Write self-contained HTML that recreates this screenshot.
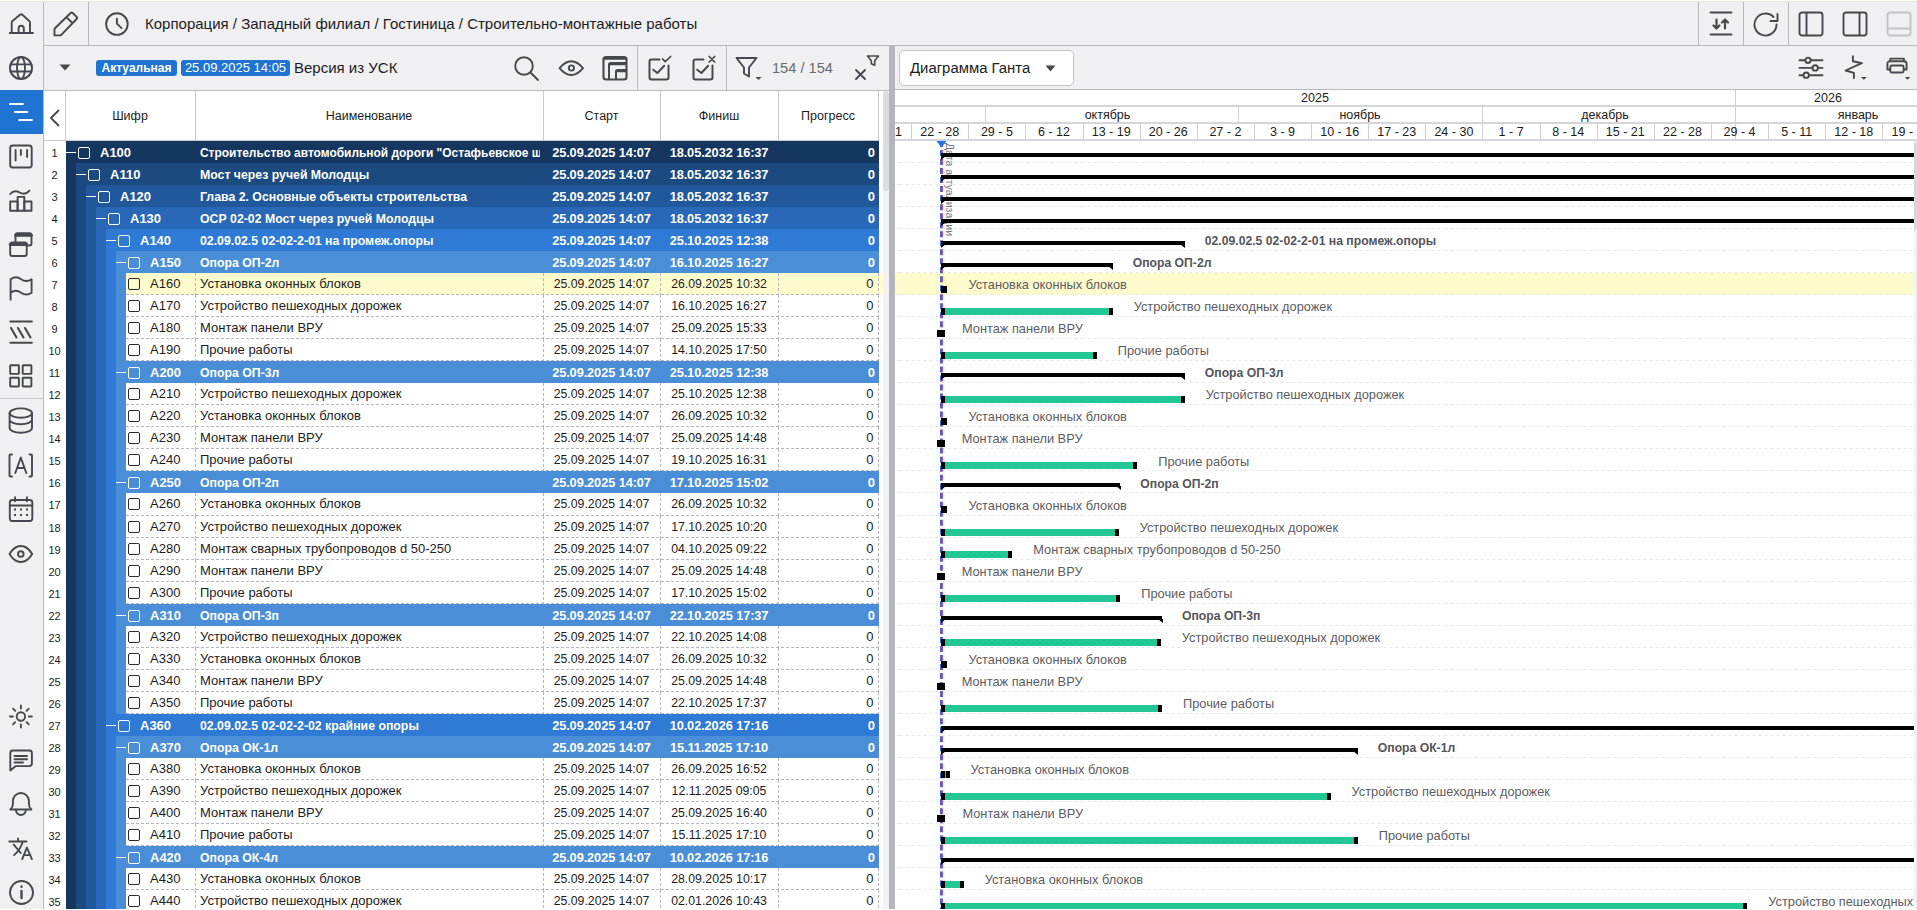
<!DOCTYPE html>
<html><head><meta charset="utf-8"><title>Gantt</title>
<style>
*{box-sizing:border-box;margin:0;padding:0}
html,body{width:1917px;height:910px;overflow:hidden;background:#fff;font-family:"Liberation Sans", sans-serif;color:#1c1c1e}
.a{position:absolute}
.t{position:absolute;white-space:nowrap;line-height:22px;font-size:13px}
.hd{position:absolute;white-space:nowrap;font-size:12.5px;line-height:16px;color:#1c1c1e;text-align:center}
.g{color:#fff;font-weight:bold}
.cb{position:absolute;width:12px;height:12px;border:1.5px solid #2a2a2e;border-radius:2px}
.cbw{border-color:#fff}
.mn{position:absolute;height:1.5px;width:10px;background:#fff}
</style></head><body>

<div class="a" style="left:0;top:0;width:1917px;height:910px;background:#fff"></div>
<div class="a" style="left:0;top:0;width:1917px;height:90px;background:#f0f0f2"></div>
<div class="a" style="left:0;top:0;width:43px;height:909px;background:#f0f0f2"></div>
<div class="a" style="left:0;top:0;width:1917px;height:1px;background:#fff"></div>
<div class="a" style="left:0;top:1px;width:1917px;height:1px;background:#e3e7dc"></div>
<div class="a" style="left:43px;top:2px;width:1px;height:907px;background:#b9b9bf"></div>
<div class="a" style="left:44px;top:45px;width:1873px;height:1px;background:#b9b9bf"></div>
<div class="a" style="left:88px;top:2px;width:1px;height:43px;background:#b9b9bf"></div>
<div class="a" style="left:1698px;top:2px;width:1px;height:43px;background:#b9b9bf"></div>
<div class="a" style="left:1743px;top:2px;width:1px;height:43px;background:#b9b9bf"></div>
<div class="a" style="left:1788px;top:2px;width:1px;height:43px;background:#b9b9bf"></div>
<div class="a" style="left:44px;top:90px;width:845px;height:1px;background:#b9b9bf"></div>
<div class="a" style="left:895px;top:89px;width:1022px;height:1px;background:#b9b9bf"></div>
<div class="a" style="left:637px;top:46px;width:1px;height:44px;background:#b9b9bf"></div>
<div class="a" style="left:726px;top:46px;width:1px;height:44px;background:#b9b9bf"></div>
<div class="a" style="left:145px;top:13px;font-size:15px;line-height:22px;white-space:nowrap;color:#1c1c1e">Корпорация / Западный филиал / Гостиница / Строительно-монтажные работы</div>
<svg style="position:absolute;left:9px;top:12px" width="26" height="24" viewBox="0 0 26 24" fill="none" stroke="#47474f" stroke-width="1.9" stroke-linecap="round" stroke-linejoin="round" ><path d="M0.5 21h23.5"/><path d="M2.7 21V10.6a2 2 0 0 1 .8-1.6L11 2.8a1.8 1.8 0 0 1 2.4 0L20.2 9a2 2 0 0 1 .8 1.6V21"/><path d="M9.6 21v-4.6a2.6 2.6 0 0 1 5.2 0V21"/></svg>
<svg style="position:absolute;left:53px;top:11px" width="26" height="26" viewBox="0 0 26 26" fill="none" stroke="#47474f" stroke-width="1.9" stroke-linecap="round" stroke-linejoin="round" ><path d="M1.5 17.8L17.6 2a1.5 1.5 0 0 1 2.1 0l3.9 3.9a1.5 1.5 0 0 1 0 2.1L7.8 24.4H1.5z"/><path d="M13.8 6.6l5.4 5.2"/></svg>
<svg style="position:absolute;left:104px;top:11px" width="26" height="26" viewBox="0 0 26 26" fill="none" stroke="#47474f" stroke-width="1.9" stroke-linecap="round" stroke-linejoin="round" ><circle cx="12.9" cy="13.1" r="10.8"/><path d="M12.9 7.6v5l4.6 4.6"/></svg>
<svg style="position:absolute;left:1708px;top:11px" width="26" height="26" viewBox="0 0 26 26" fill="none" stroke="#47474f" stroke-width="1.9" stroke-linecap="round" stroke-linejoin="round" ><path d="M2.5 1.5h21M2.5 23.5h21"/><path d="M8.5 8.5v9M5.5 14.5l3 3 3-3" stroke-width="2.2"/><path d="M17 17.5v-9M14 11.5l3-3 3 3" stroke-width="2.2"/></svg>
<svg style="position:absolute;left:1753px;top:11px" width="27" height="27" viewBox="0 0 27 27" fill="none" stroke="#47474f" stroke-width="1.9" stroke-linecap="round" stroke-linejoin="round" ><path d="M23.5 13.5A11 11 0 1 1 20.5 6"/><path d="M24.5 3v7h-7"/></svg>
<svg style="position:absolute;left:1798px;top:11px" width="26" height="26" viewBox="0 0 26 26" fill="none" stroke="#47474f" stroke-width="1.9" stroke-linecap="round" stroke-linejoin="round" ><rect x="1.5" y="1.5" width="23" height="23" rx="2.5"/><path d="M8.5 2v22"/></svg>
<svg style="position:absolute;left:1842px;top:11px" width="26" height="26" viewBox="0 0 26 26" fill="none" stroke="#47474f" stroke-width="1.9" stroke-linecap="round" stroke-linejoin="round" ><rect x="1.5" y="1.5" width="23" height="23" rx="2.5"/><path d="M17.5 2v22"/></svg>
<svg style="position:absolute;left:1886px;top:11px" width="26" height="26" viewBox="0 0 26 26" fill="none" stroke="#c4c4c8" stroke-width="1.9" stroke-linecap="round" stroke-linejoin="round"><rect x="1.5" y="1.5" width="23" height="23" rx="2.5"/><path d="M2 17.5h22"/></svg>
<svg style="position:absolute;left:8px;top:55px" width="26" height="26" viewBox="0 0 26 26" fill="none" stroke="#47474f" stroke-width="1.9" stroke-linecap="round" stroke-linejoin="round" ><circle cx="13" cy="13" r="11"/><path d="M2.5 9.4h21M2.5 16.5h21"/><ellipse cx="13" cy="13" rx="4" ry="11"/></svg>
<div class="a" style="left:0;top:90px;width:43px;height:44px;background:#1f74d2"></div>
<svg style="position:absolute;left:8px;top:100px" width="27" height="24" viewBox="0 0 27 24" fill="none" stroke="#fff" stroke-width="1.9" stroke-linecap="round" stroke-linejoin="round" ><path d="M2 4h13M7 12h12.3M11.2 20H24"/></svg>
<svg style="position:absolute;left:8px;top:143px" width="27" height="26" viewBox="0 0 27 26" fill="none" stroke="#47474f" stroke-width="1.9" stroke-linecap="round" stroke-linejoin="round" ><rect x="2.2" y="2.5" width="21.5" height="22" rx="2.5"/><path d="M7.6 7v10.5M12.9 7v5M19.1 7v7"/></svg>
<svg style="position:absolute;left:8px;top:187px" width="27" height="27" viewBox="0 0 27 27" fill="none" stroke="#47474f" stroke-width="1.9" stroke-linecap="round" stroke-linejoin="round" ><path d="M2.2 7c3-3.5 6-3.5 9.5-1.5s6.5 2 9.8-1.8"/><rect x="2.2" y="14.5" width="7.4" height="9.3"/><rect x="9.6" y="9.9" width="6.7" height="13.9"/><rect x="16.3" y="14.5" width="7.2" height="9.3"/></svg>
<svg style="position:absolute;left:8px;top:231px" width="27" height="27" viewBox="0 0 27 27" fill="none" stroke="#47474f" stroke-width="1.9" stroke-linecap="round" stroke-linejoin="round" ><rect x="7.5" y="2.3" width="16" height="12.2" rx="2"/><path d="M7.5 4.2h16" stroke-width="3"/><rect x="2.2" y="11.5" width="16.5" height="13.5" rx="2" fill="#f0f0f2"/><path d="M2.2 13.4h16.5" stroke-width="3"/></svg>
<svg style="position:absolute;left:8px;top:275px" width="27" height="27" viewBox="0 0 27 27" fill="none" stroke="#47474f" stroke-width="1.9" stroke-linecap="round" stroke-linejoin="round" ><path d="M2.6 24.7V4.2c3.5-2.5 7-2.5 10.5 0s7 2.5 10.5 0v13.5c-3.5 2.5-7 2.5-10.5 0s-7-2.5-10.5 0"/></svg>
<svg style="position:absolute;left:8px;top:319px" width="27" height="27" viewBox="0 0 27 27" fill="none" stroke="#47474f" stroke-width="1.9" stroke-linecap="round" stroke-linejoin="round" ><path d="M2.3 2.5h21.6M2.3 23.8h21.6"/><path d="M3 9l5.5 9.5M10 9l5.5 9.5M17 9l5.5 9.5" stroke-width="2.1"/></svg>
<svg style="position:absolute;left:8px;top:363px" width="27" height="27" viewBox="0 0 27 27" fill="none" stroke="#47474f" stroke-width="1.9" stroke-linecap="round" stroke-linejoin="round" ><rect x="2.2" y="2.2" width="8.7" height="8.7" rx="0.5"/><rect x="14.7" y="2.2" width="8.7" height="8.7" rx="0.5"/><rect x="2.2" y="14.8" width="8.7" height="8.7" rx="0.5"/><rect x="14.7" y="14.8" width="8.7" height="8.7" rx="0.5"/></svg>
<div class="a" style="left:0;top:398px;width:43px;height:1px;background:#c8c8cc"></div>
<svg style="position:absolute;left:8px;top:407px" width="27" height="27" viewBox="0 0 27 27" fill="none" stroke="#47474f" stroke-width="1.9" stroke-linecap="round" stroke-linejoin="round" ><ellipse cx="12.8" cy="6.1" rx="11.2" ry="4.7"/><path d="M1.6 6.1v15M24 6.1v15M1.6 12.6a11.2 4.7 0 0 0 22.4 0M1.6 21a11.2 4.7 0 0 0 22.4 0"/></svg>
<svg style="position:absolute;left:8px;top:452px" width="27" height="27" viewBox="0 0 27 27" fill="none" stroke="#47474f" stroke-width="1.9" stroke-linecap="round" stroke-linejoin="round" ><path d="M4 2.5H2.5a1 1 0 0 0-1 1v20a1 1 0 0 0 1 1H4M21.5 2.5H23a1 1 0 0 1 1 1v20a1 1 0 0 1-1 1h-1.5"/><path d="M7.3 21l5.5-15.5L18.3 21M9.2 16h7.2"/></svg>
<svg style="position:absolute;left:8px;top:496px" width="27" height="27" viewBox="0 0 27 27" fill="none" stroke="#47474f" stroke-width="1.9" stroke-linecap="round" stroke-linejoin="round" ><rect x="1.8" y="4" width="22.5" height="21" rx="2.5"/><path d="M1.8 9.5h22.5M7 1.3v4M19 1.3v4"/><path d="M6 13.5h2M12 13.5h2M18 13.5h2M6 19h2M12 19h2M18 19h2" stroke-width="1.8" stroke-linecap="butt"/></svg>
<svg style="position:absolute;left:8px;top:541px" width="27" height="27" viewBox="0 0 27 27" fill="none" stroke="#47474f" stroke-width="1.9" stroke-linecap="round" stroke-linejoin="round" ><path d="M1.5 13C4.5 8 8.5 5 12.8 5S21.2 8 24.2 13C21.2 18 17.2 21 12.8 21S4.5 18 1.5 13z"/><circle cx="12.8" cy="13" r="2.8"/></svg>
<svg style="position:absolute;left:8px;top:703px" width="27" height="27" viewBox="0 0 27 27" fill="none" stroke="#47474f" stroke-width="1.9" stroke-linecap="round" stroke-linejoin="round" ><circle cx="12.9" cy="13.5" r="4.2"/><path d="M12.9 2.5v3M12.9 21.5v3M1.9 13.5h3M20.9 13.5h3M5.1 5.7l2.1 2.1M18.6 19.2l2.1 2.1M5.1 21.3l2.1-2.1M18.6 7.8l2.1-2.1"/></svg>
<svg style="position:absolute;left:8px;top:747px" width="27" height="27" viewBox="0 0 27 27" fill="none" stroke="#47474f" stroke-width="1.9" stroke-linecap="round" stroke-linejoin="round" ><path d="M2.3 23.5V6a2.5 2.5 0 0 1 2.5-2.5h16.6a2.5 2.5 0 0 1 2.5 2.5v10.6a2.5 2.5 0 0 1-2.5 2.5H7.8z"/><path d="M6.5 9h12.5M6.5 12.2h12.5M6.5 15.5h8.5"/></svg>
<svg style="position:absolute;left:8px;top:791px" width="27" height="27" viewBox="0 0 27 27" fill="none" stroke="#47474f" stroke-width="1.9" stroke-linecap="round" stroke-linejoin="round" ><path d="M2.3 18.5c1.8-1.5 2.6-3 2.6-5.5V10a8 8 0 0 1 16 0v3c0 2.5.8 4 2.6 5.5z"/><path d="M7.9 18.8a5 5.2 0 0 0 10 0"/></svg>
<svg style="position:absolute;left:8px;top:835px" width="27" height="27" viewBox="0 0 27 27" fill="none" stroke="#47474f" stroke-width="1.9" stroke-linecap="round" stroke-linejoin="round" ><path d="M1.3 6.5h17.2M10 3.5v3"/><path d="M14.4 7.7c-1.5 5-4.5 9-8.3 12.4M5.7 9.6l7.1 8.4"/><path d="M14.2 24.1l4.7-11.5 5 11.5M16 20.1h6"/></svg>
<svg style="position:absolute;left:8px;top:879px" width="27" height="27" viewBox="0 0 27 27" fill="none" stroke="#47474f" stroke-width="1.9" stroke-linecap="round" stroke-linejoin="round" ><circle cx="13.5" cy="13.5" r="11.5"/><path d="M13.5 12v7M13.5 7.5v.3" stroke-width="2.4"/></svg>
<svg class="a" style="left:59px;top:64px" width="12" height="7"><path d="M0.5 0.5h11l-5.5 6z" fill="#47474f"/></svg>
<div class="a" style="left:96px;top:60px;width:81px;height:16px;background:#1f74d2;border-radius:3px;color:#fff;font-size:12px;line-height:16px;text-align:center;font-weight:bold">Актуальная</div>
<div class="a" style="left:181px;top:60px;width:109px;height:16px;background:#1f74d2;border-radius:3px;color:#fff;font-size:13px;line-height:16px;text-align:center">25.09.2025 14:05</div>
<div class="a" style="left:294px;top:57px;font-size:15px;line-height:22px;white-space:nowrap;color:#1c1c1e">Версия из УСК</div>
<svg style="position:absolute;left:513px;top:55px" width="28" height="27" viewBox="0 0 28 27" fill="none" stroke="#47474f" stroke-width="1.9" stroke-linecap="round" stroke-linejoin="round" ><circle cx="11" cy="11" r="8.8"/><path d="M17.5 17.5L25 25"/></svg>
<svg style="position:absolute;left:557px;top:55px" width="28" height="27" viewBox="0 0 28 27" fill="none" stroke="#47474f" stroke-width="1.9" stroke-linecap="round" stroke-linejoin="round" ><path d="M2.6 13.1C5.8 9.2 9.6 6.2 14.3 6.2S22.8 9.2 26 13.1C22.8 17 19 20 14.3 20S5.8 17 2.6 13.1z"/><circle cx="14.4" cy="13" r="2.6"/></svg>
<svg style="position:absolute;left:601px;top:54px" width="28" height="28" viewBox="0 0 28 28" fill="none" stroke="#47474f" stroke-width="1.9" stroke-linecap="round" stroke-linejoin="round" ><rect x="2.5" y="3" width="23" height="22.5" rx="2.5" stroke-width="2.1"/><path d="M3 4.6h22" stroke-width="2.4"/><path d="M8 25V10.5a1.5 1.5 0 0 1 1.5-1.5H25M8.5 10.2H25" stroke-width="2"/><path d="M15 25V17.5a1.5 1.5 0 0 1 1.5-1.5H25M15.5 17.2H25" stroke-width="2"/></svg>
<svg style="position:absolute;left:646px;top:54px" width="28" height="28" viewBox="0 0 28 28" fill="none" stroke="#47474f" stroke-width="1.9" stroke-linecap="round" stroke-linejoin="round" ><path d="M13.5 5.5H5.5a2 2 0 0 0-2 2v16a2 2 0 0 0 2 2h15a2 2 0 0 0 2-2V11.5" stroke-width="2"/><path d="M7.2 15.7l4.2 3.3 6.8-7.2" stroke-width="2"/><path d="M16.6 5l2.6 2.6 5.5-5.1" stroke-width="1.7"/></svg>
<svg style="position:absolute;left:690px;top:54px" width="28" height="28" viewBox="0 0 28 28" fill="none" stroke="#47474f" stroke-width="1.9" stroke-linecap="round" stroke-linejoin="round" ><path d="M13.5 5.5H5.5a2 2 0 0 0-2 2v16a2 2 0 0 0 2 2h15a2 2 0 0 0 2-2V11.5" stroke-width="2"/><path d="M7.2 15.7l4.2 3.3 6.8-7.2" stroke-width="2"/><path d="M19.2 2.5l5.5 5.5M24.7 2.5l-5.5 5.5" stroke-width="1.7"/></svg>
<svg style="position:absolute;left:734px;top:54px" width="30" height="28" viewBox="0 0 30 28" fill="none" stroke="#47474f" stroke-width="1.9" stroke-linecap="round" stroke-linejoin="round" ><path d="M2.5 4h20l-7.5 9.5v9l-5-3v-6z"/><path d="M21.5 23h6l-3 3z" fill="#47474f" stroke="none"/></svg>
<div class="a" style="left:772px;top:57px;font-size:14.6px;line-height:22px;white-space:nowrap;color:#6a6a70">154 / 154</div>
<svg style="position:absolute;left:852px;top:53px" width="28" height="30" viewBox="0 0 28 30" fill="none" stroke="#47474f" stroke-width="1.9" stroke-linecap="round" stroke-linejoin="round" ><path d="M4 17l9 9M13 17l-9 9"/><path d="M15.5 3h11l-3.8 4.8v4.5l-3.4-1.6V7.8z" stroke-width="1.6"/></svg>
<div class="a" style="left:899px;top:50px;width:175px;height:36px;background:#fff;border:1px solid #c2c2c8;border-radius:5px"></div>
<div class="a" style="left:910px;top:57px;font-size:14.9px;line-height:22px;white-space:nowrap;color:#1c1c1e">Диаграмма Ганта</div>
<svg class="a" style="left:1045px;top:65px" width="11" height="7"><path d="M0.5 0.5h10l-5 6z" fill="#47474f"/></svg>
<svg style="position:absolute;left:1797px;top:56px" width="28" height="26" viewBox="0 0 28 26" fill="none" stroke="#47474f" stroke-width="1.9" stroke-linecap="round" stroke-linejoin="round" ><path d="M2.5 4.3h23M2.5 11.9h23M2.5 19.2h23"/><circle cx="11" cy="4.3" r="2.7" fill="#f0f0f2"/><circle cx="18.2" cy="11.9" r="2.7" fill="#f0f0f2"/><circle cx="9.2" cy="19.2" r="2.7" fill="#f0f0f2"/></svg>
<svg style="position:absolute;left:1843px;top:54px" width="30" height="28" viewBox="0 0 30 28" fill="none" stroke="#47474f" stroke-width="1.9" stroke-linecap="round" stroke-linejoin="round" ><path d="M9.9 2.3v4.9l9 2L2.6 16.5l8.3 2.3v5.3"/><path d="M17.9 23.1h5.9l-2.95 2.7z" fill="#47474f" stroke="none"/></svg>
<svg style="position:absolute;left:1885px;top:55px" width="32" height="28" viewBox="0 0 32 28" fill="none" stroke="#47474f" stroke-width="1.9" stroke-linecap="round" stroke-linejoin="round" ><path d="M5.3 5.8V3.6h13.6v2.2"/><path d="M2.4 14.5V8.7a2.5 2.5 0 0 1 2.5-2.5h14.2a2.5 2.5 0 0 1 2.5 2.5v5.8z"/><rect x="5.3" y="10.5" width="13.3" height="7" rx="1.5" fill="#f0f0f2"/><path d="M19.9 22.1h5.3l-2.65 2.7z" fill="#47474f" stroke="none"/></svg>
<div class="a" style="left:44px;top:91px;width:835px;height:49px;background:#fff"></div>
<div class="a" style="left:44px;top:140px;width:835px;height:1px;background:#c9c9ce"></div>
<div class="a" style="left:65px;top:91px;width:1px;height:49px;background:#c9c9ce"></div>
<div class="a" style="left:195px;top:91px;width:1px;height:49px;background:#c9c9ce"></div>
<div class="a" style="left:543px;top:91px;width:1px;height:49px;background:#c9c9ce"></div>
<div class="a" style="left:660px;top:91px;width:1px;height:49px;background:#c9c9ce"></div>
<div class="a" style="left:778px;top:91px;width:1px;height:49px;background:#c9c9ce"></div>
<div class="a" style="left:878px;top:91px;width:1px;height:49px;background:#c9c9ce"></div>
<svg style="position:absolute;left:48px;top:108px" width="14" height="20" viewBox="0 0 14 20" fill="none" stroke="#47474f" stroke-width="1.9" stroke-linecap="round" stroke-linejoin="round" ><path d="M10.5 2.5L3 10l7.5 7.5" stroke-width="1.8"/></svg>
<div class="hd" style="left:65px;top:108px;width:130px">Шифр</div>
<div class="hd" style="left:195px;top:108px;width:348px">Наименование</div>
<div class="hd" style="left:543px;top:108px;width:117px">Старт</div>
<div class="hd" style="left:660px;top:108px;width:118px">Финиш</div>
<div class="hd" style="left:778px;top:108px;width:100px">Прогресс</div>
<div class="t" style="left:44px;top:142px;width:21px;text-align:center;font-size:11px">1</div>
<div class="a" style="left:66px;top:141px;width:813px;height:22px;background:#15365f"></div>
<div class="mn" style="left:66px;top:151.5px"></div>
<div class="cb cbw" style="left:78px;top:147px"></div>
<div class="t g" style="left:100px;top:142px">A100</div>
<div class="t g" style="left:200px;top:142px;width:340px;overflow:hidden;font-size:11.95px">Строительство автомобильной дороги "Остафьевское шоссе"</div>
<div class="t g" style="left:543px;top:142px;width:117px;text-align:center;font-size:12.8px;letter-spacing:-0.1px">25.09.2025 14:07</div>
<div class="t g" style="left:660px;top:142px;width:118px;text-align:center;font-size:12.8px;letter-spacing:-0.1px">18.05.2032 16:37</div>
<div class="t g" style="left:778px;top:142px;width:97px;text-align:right">0</div>
<div class="t" style="left:44px;top:164px;width:21px;text-align:center;font-size:11px">2</div>
<div class="a" style="left:66px;top:163px;width:10px;height:22px;background:#15365f"></div>
<div class="a" style="left:76px;top:163px;width:803px;height:22px;background:#1b4a80"></div>
<div class="mn" style="left:76px;top:173.5px"></div>
<div class="cb cbw" style="left:88px;top:169px"></div>
<div class="t g" style="left:110px;top:164px">A110</div>
<div class="t g" style="left:200px;top:164px;width:340px;overflow:hidden;font-size:12.3px">Мост через ручей Молодцы</div>
<div class="t g" style="left:543px;top:164px;width:117px;text-align:center;font-size:12.8px;letter-spacing:-0.1px">25.09.2025 14:07</div>
<div class="t g" style="left:660px;top:164px;width:118px;text-align:center;font-size:12.8px;letter-spacing:-0.1px">18.05.2032 16:37</div>
<div class="t g" style="left:778px;top:164px;width:97px;text-align:right">0</div>
<div class="t" style="left:44px;top:186px;width:21px;text-align:center;font-size:11px">3</div>
<div class="a" style="left:66px;top:185px;width:10px;height:22px;background:#15365f"></div>
<div class="a" style="left:76px;top:185px;width:10px;height:22px;background:#1b4a80"></div>
<div class="a" style="left:86px;top:185px;width:793px;height:22px;background:#21589b"></div>
<div class="mn" style="left:86px;top:195.5px"></div>
<div class="cb cbw" style="left:98px;top:191px"></div>
<div class="t g" style="left:120px;top:186px">A120</div>
<div class="t g" style="left:200px;top:186px;width:340px;overflow:hidden;font-size:12.3px">Глава 2. Основные объекты строительства</div>
<div class="t g" style="left:543px;top:186px;width:117px;text-align:center;font-size:12.8px;letter-spacing:-0.1px">25.09.2025 14:07</div>
<div class="t g" style="left:660px;top:186px;width:118px;text-align:center;font-size:12.8px;letter-spacing:-0.1px">18.05.2032 16:37</div>
<div class="t g" style="left:778px;top:186px;width:97px;text-align:right">0</div>
<div class="t" style="left:44px;top:208px;width:21px;text-align:center;font-size:11px">4</div>
<div class="a" style="left:66px;top:207px;width:10px;height:22px;background:#15365f"></div>
<div class="a" style="left:76px;top:207px;width:10px;height:22px;background:#1b4a80"></div>
<div class="a" style="left:86px;top:207px;width:10px;height:22px;background:#21589b"></div>
<div class="a" style="left:96px;top:207px;width:783px;height:22px;background:#2868b6"></div>
<div class="mn" style="left:96px;top:217.5px"></div>
<div class="cb cbw" style="left:108px;top:213px"></div>
<div class="t g" style="left:130px;top:208px">A130</div>
<div class="t g" style="left:200px;top:208px;width:340px;overflow:hidden;font-size:12.3px">ОСР 02-02 Мост через ручей Молодцы</div>
<div class="t g" style="left:543px;top:208px;width:117px;text-align:center;font-size:12.8px;letter-spacing:-0.1px">25.09.2025 14:07</div>
<div class="t g" style="left:660px;top:208px;width:118px;text-align:center;font-size:12.8px;letter-spacing:-0.1px">18.05.2032 16:37</div>
<div class="t g" style="left:778px;top:208px;width:97px;text-align:right">0</div>
<div class="t" style="left:44px;top:230px;width:21px;text-align:center;font-size:11px">5</div>
<div class="a" style="left:66px;top:229px;width:10px;height:22px;background:#15365f"></div>
<div class="a" style="left:76px;top:229px;width:10px;height:22px;background:#1b4a80"></div>
<div class="a" style="left:86px;top:229px;width:10px;height:22px;background:#21589b"></div>
<div class="a" style="left:96px;top:229px;width:10px;height:22px;background:#2868b6"></div>
<div class="a" style="left:106px;top:229px;width:773px;height:22px;background:#2e7ad4"></div>
<div class="mn" style="left:106px;top:239.5px"></div>
<div class="cb cbw" style="left:118px;top:235px"></div>
<div class="t g" style="left:140px;top:230px">A140</div>
<div class="t g" style="left:200px;top:230px;width:340px;overflow:hidden;font-size:12.3px">02.09.02.5 02-02-2-01 на промеж.опоры</div>
<div class="t g" style="left:543px;top:230px;width:117px;text-align:center;font-size:12.8px;letter-spacing:-0.1px">25.09.2025 14:07</div>
<div class="t g" style="left:660px;top:230px;width:118px;text-align:center;font-size:12.8px;letter-spacing:-0.1px">25.10.2025 12:38</div>
<div class="t g" style="left:778px;top:230px;width:97px;text-align:right">0</div>
<div class="t" style="left:44px;top:252px;width:21px;text-align:center;font-size:11px">6</div>
<div class="a" style="left:66px;top:251px;width:10px;height:22px;background:#15365f"></div>
<div class="a" style="left:76px;top:251px;width:10px;height:22px;background:#1b4a80"></div>
<div class="a" style="left:86px;top:251px;width:10px;height:22px;background:#21589b"></div>
<div class="a" style="left:96px;top:251px;width:10px;height:22px;background:#2868b6"></div>
<div class="a" style="left:106px;top:251px;width:10px;height:22px;background:#2e7ad4"></div>
<div class="a" style="left:116px;top:251px;width:763px;height:22px;background:#4a8ed8"></div>
<div class="mn" style="left:116px;top:261.5px"></div>
<div class="cb cbw" style="left:128px;top:257px"></div>
<div class="t g" style="left:150px;top:252px">A150</div>
<div class="t g" style="left:200px;top:252px;width:340px;overflow:hidden;font-size:12.3px">Опора ОП-2л</div>
<div class="t g" style="left:543px;top:252px;width:117px;text-align:center;font-size:12.8px;letter-spacing:-0.1px">25.09.2025 14:07</div>
<div class="t g" style="left:660px;top:252px;width:118px;text-align:center;font-size:12.8px;letter-spacing:-0.1px">16.10.2025 16:27</div>
<div class="t g" style="left:778px;top:252px;width:97px;text-align:right">0</div>
<div class="t" style="left:44px;top:274px;width:21px;text-align:center;font-size:11px">7</div>
<div class="a" style="left:66px;top:273px;width:10px;height:22px;background:#15365f"></div>
<div class="a" style="left:76px;top:273px;width:10px;height:22px;background:#1b4a80"></div>
<div class="a" style="left:86px;top:273px;width:10px;height:22px;background:#21589b"></div>
<div class="a" style="left:96px;top:273px;width:10px;height:22px;background:#2868b6"></div>
<div class="a" style="left:106px;top:273px;width:10px;height:22px;background:#2e7ad4"></div>
<div class="a" style="left:116px;top:273px;width:10px;height:22px;background:#4a8ed8"></div>
<div class="a" style="left:126px;top:273px;width:753px;height:22px;background:#fefbcc"></div>
<div class="a" style="left:126px;top:294px;width:752px;height:1px;background:repeating-linear-gradient(90deg,#b6b6be 0 3px,transparent 3px 5px)"></div>
<div class="a" style="left:195px;top:273px;width:1px;height:22px;background:repeating-linear-gradient(180deg,#b6b6be 0 3px,transparent 3px 5px)"></div>
<div class="a" style="left:543px;top:273px;width:1px;height:22px;background:repeating-linear-gradient(180deg,#b6b6be 0 3px,transparent 3px 5px)"></div>
<div class="a" style="left:660px;top:273px;width:1px;height:22px;background:repeating-linear-gradient(180deg,#b6b6be 0 3px,transparent 3px 5px)"></div>
<div class="a" style="left:778px;top:273px;width:1px;height:22px;background:repeating-linear-gradient(180deg,#b6b6be 0 3px,transparent 3px 5px)"></div>
<div class="a" style="left:878px;top:273px;width:1px;height:22px;background:repeating-linear-gradient(180deg,#b6b6be 0 3px,transparent 3px 5px)"></div>
<div class="cb" style="left:128px;top:278px"></div>
<div class="t" style="left:150px;top:273px">A160</div>
<div class="t" style="left:200px;top:273px">Установка оконных блоков</div>
<div class="t" style="left:543px;top:273px;width:117px;text-align:center;font-size:12.3px">25.09.2025 14:07</div>
<div class="t" style="left:660px;top:273px;width:118px;text-align:center;font-size:12.3px">26.09.2025 10:32</div>
<div class="t" style="left:778px;top:273px;width:95.5px;text-align:right">0</div>
<div class="t" style="left:44px;top:296px;width:21px;text-align:center;font-size:11px">8</div>
<div class="a" style="left:66px;top:295px;width:10px;height:22px;background:#15365f"></div>
<div class="a" style="left:76px;top:295px;width:10px;height:22px;background:#1b4a80"></div>
<div class="a" style="left:86px;top:295px;width:10px;height:22px;background:#21589b"></div>
<div class="a" style="left:96px;top:295px;width:10px;height:22px;background:#2868b6"></div>
<div class="a" style="left:106px;top:295px;width:10px;height:22px;background:#2e7ad4"></div>
<div class="a" style="left:116px;top:295px;width:10px;height:22px;background:#4a8ed8"></div>
<div class="a" style="left:126px;top:295px;width:753px;height:22px;background:#fff"></div>
<div class="a" style="left:126px;top:316px;width:752px;height:1px;background:repeating-linear-gradient(90deg,#b6b6be 0 3px,transparent 3px 5px)"></div>
<div class="a" style="left:195px;top:295px;width:1px;height:22px;background:repeating-linear-gradient(180deg,#b6b6be 0 3px,transparent 3px 5px)"></div>
<div class="a" style="left:543px;top:295px;width:1px;height:22px;background:repeating-linear-gradient(180deg,#b6b6be 0 3px,transparent 3px 5px)"></div>
<div class="a" style="left:660px;top:295px;width:1px;height:22px;background:repeating-linear-gradient(180deg,#b6b6be 0 3px,transparent 3px 5px)"></div>
<div class="a" style="left:778px;top:295px;width:1px;height:22px;background:repeating-linear-gradient(180deg,#b6b6be 0 3px,transparent 3px 5px)"></div>
<div class="a" style="left:878px;top:295px;width:1px;height:22px;background:repeating-linear-gradient(180deg,#b6b6be 0 3px,transparent 3px 5px)"></div>
<div class="cb" style="left:128px;top:300px"></div>
<div class="t" style="left:150px;top:295px">A170</div>
<div class="t" style="left:200px;top:295px">Устройство пешеходных дорожек</div>
<div class="t" style="left:543px;top:295px;width:117px;text-align:center;font-size:12.3px">25.09.2025 14:07</div>
<div class="t" style="left:660px;top:295px;width:118px;text-align:center;font-size:12.3px">16.10.2025 16:27</div>
<div class="t" style="left:778px;top:295px;width:95.5px;text-align:right">0</div>
<div class="t" style="left:44px;top:318px;width:21px;text-align:center;font-size:11px">9</div>
<div class="a" style="left:66px;top:317px;width:10px;height:22px;background:#15365f"></div>
<div class="a" style="left:76px;top:317px;width:10px;height:22px;background:#1b4a80"></div>
<div class="a" style="left:86px;top:317px;width:10px;height:22px;background:#21589b"></div>
<div class="a" style="left:96px;top:317px;width:10px;height:22px;background:#2868b6"></div>
<div class="a" style="left:106px;top:317px;width:10px;height:22px;background:#2e7ad4"></div>
<div class="a" style="left:116px;top:317px;width:10px;height:22px;background:#4a8ed8"></div>
<div class="a" style="left:126px;top:317px;width:753px;height:22px;background:#fff"></div>
<div class="a" style="left:126px;top:338px;width:752px;height:1px;background:repeating-linear-gradient(90deg,#b6b6be 0 3px,transparent 3px 5px)"></div>
<div class="a" style="left:195px;top:317px;width:1px;height:22px;background:repeating-linear-gradient(180deg,#b6b6be 0 3px,transparent 3px 5px)"></div>
<div class="a" style="left:543px;top:317px;width:1px;height:22px;background:repeating-linear-gradient(180deg,#b6b6be 0 3px,transparent 3px 5px)"></div>
<div class="a" style="left:660px;top:317px;width:1px;height:22px;background:repeating-linear-gradient(180deg,#b6b6be 0 3px,transparent 3px 5px)"></div>
<div class="a" style="left:778px;top:317px;width:1px;height:22px;background:repeating-linear-gradient(180deg,#b6b6be 0 3px,transparent 3px 5px)"></div>
<div class="a" style="left:878px;top:317px;width:1px;height:22px;background:repeating-linear-gradient(180deg,#b6b6be 0 3px,transparent 3px 5px)"></div>
<div class="cb" style="left:128px;top:322px"></div>
<div class="t" style="left:150px;top:317px">A180</div>
<div class="t" style="left:200px;top:317px">Монтаж панели ВРУ</div>
<div class="t" style="left:543px;top:317px;width:117px;text-align:center;font-size:12.3px">25.09.2025 14:07</div>
<div class="t" style="left:660px;top:317px;width:118px;text-align:center;font-size:12.3px">25.09.2025 15:33</div>
<div class="t" style="left:778px;top:317px;width:95.5px;text-align:right">0</div>
<div class="t" style="left:44px;top:340px;width:21px;text-align:center;font-size:11px">10</div>
<div class="a" style="left:66px;top:339px;width:10px;height:22px;background:#15365f"></div>
<div class="a" style="left:76px;top:339px;width:10px;height:22px;background:#1b4a80"></div>
<div class="a" style="left:86px;top:339px;width:10px;height:22px;background:#21589b"></div>
<div class="a" style="left:96px;top:339px;width:10px;height:22px;background:#2868b6"></div>
<div class="a" style="left:106px;top:339px;width:10px;height:22px;background:#2e7ad4"></div>
<div class="a" style="left:116px;top:339px;width:10px;height:22px;background:#4a8ed8"></div>
<div class="a" style="left:126px;top:339px;width:753px;height:22px;background:#fff"></div>
<div class="a" style="left:126px;top:360px;width:752px;height:1px;background:repeating-linear-gradient(90deg,#b6b6be 0 3px,transparent 3px 5px)"></div>
<div class="a" style="left:195px;top:339px;width:1px;height:22px;background:repeating-linear-gradient(180deg,#b6b6be 0 3px,transparent 3px 5px)"></div>
<div class="a" style="left:543px;top:339px;width:1px;height:22px;background:repeating-linear-gradient(180deg,#b6b6be 0 3px,transparent 3px 5px)"></div>
<div class="a" style="left:660px;top:339px;width:1px;height:22px;background:repeating-linear-gradient(180deg,#b6b6be 0 3px,transparent 3px 5px)"></div>
<div class="a" style="left:778px;top:339px;width:1px;height:22px;background:repeating-linear-gradient(180deg,#b6b6be 0 3px,transparent 3px 5px)"></div>
<div class="a" style="left:878px;top:339px;width:1px;height:22px;background:repeating-linear-gradient(180deg,#b6b6be 0 3px,transparent 3px 5px)"></div>
<div class="cb" style="left:128px;top:344px"></div>
<div class="t" style="left:150px;top:339px">A190</div>
<div class="t" style="left:200px;top:339px">Прочие работы</div>
<div class="t" style="left:543px;top:339px;width:117px;text-align:center;font-size:12.3px">25.09.2025 14:07</div>
<div class="t" style="left:660px;top:339px;width:118px;text-align:center;font-size:12.3px">14.10.2025 17:50</div>
<div class="t" style="left:778px;top:339px;width:95.5px;text-align:right">0</div>
<div class="t" style="left:44px;top:362px;width:21px;text-align:center;font-size:11px">11</div>
<div class="a" style="left:66px;top:361px;width:10px;height:22px;background:#15365f"></div>
<div class="a" style="left:76px;top:361px;width:10px;height:22px;background:#1b4a80"></div>
<div class="a" style="left:86px;top:361px;width:10px;height:22px;background:#21589b"></div>
<div class="a" style="left:96px;top:361px;width:10px;height:22px;background:#2868b6"></div>
<div class="a" style="left:106px;top:361px;width:10px;height:22px;background:#2e7ad4"></div>
<div class="a" style="left:116px;top:361px;width:763px;height:22px;background:#4a8ed8"></div>
<div class="mn" style="left:116px;top:371.5px"></div>
<div class="cb cbw" style="left:128px;top:367px"></div>
<div class="t g" style="left:150px;top:362px">A200</div>
<div class="t g" style="left:200px;top:362px;width:340px;overflow:hidden;font-size:12.3px">Опора ОП-3л</div>
<div class="t g" style="left:543px;top:362px;width:117px;text-align:center;font-size:12.8px;letter-spacing:-0.1px">25.09.2025 14:07</div>
<div class="t g" style="left:660px;top:362px;width:118px;text-align:center;font-size:12.8px;letter-spacing:-0.1px">25.10.2025 12:38</div>
<div class="t g" style="left:778px;top:362px;width:97px;text-align:right">0</div>
<div class="t" style="left:44px;top:384px;width:21px;text-align:center;font-size:11px">12</div>
<div class="a" style="left:66px;top:383px;width:10px;height:22px;background:#15365f"></div>
<div class="a" style="left:76px;top:383px;width:10px;height:22px;background:#1b4a80"></div>
<div class="a" style="left:86px;top:383px;width:10px;height:22px;background:#21589b"></div>
<div class="a" style="left:96px;top:383px;width:10px;height:22px;background:#2868b6"></div>
<div class="a" style="left:106px;top:383px;width:10px;height:22px;background:#2e7ad4"></div>
<div class="a" style="left:116px;top:383px;width:10px;height:22px;background:#4a8ed8"></div>
<div class="a" style="left:126px;top:383px;width:753px;height:22px;background:#fff"></div>
<div class="a" style="left:126px;top:404px;width:752px;height:1px;background:repeating-linear-gradient(90deg,#b6b6be 0 3px,transparent 3px 5px)"></div>
<div class="a" style="left:195px;top:383px;width:1px;height:22px;background:repeating-linear-gradient(180deg,#b6b6be 0 3px,transparent 3px 5px)"></div>
<div class="a" style="left:543px;top:383px;width:1px;height:22px;background:repeating-linear-gradient(180deg,#b6b6be 0 3px,transparent 3px 5px)"></div>
<div class="a" style="left:660px;top:383px;width:1px;height:22px;background:repeating-linear-gradient(180deg,#b6b6be 0 3px,transparent 3px 5px)"></div>
<div class="a" style="left:778px;top:383px;width:1px;height:22px;background:repeating-linear-gradient(180deg,#b6b6be 0 3px,transparent 3px 5px)"></div>
<div class="a" style="left:878px;top:383px;width:1px;height:22px;background:repeating-linear-gradient(180deg,#b6b6be 0 3px,transparent 3px 5px)"></div>
<div class="cb" style="left:128px;top:388px"></div>
<div class="t" style="left:150px;top:383px">A210</div>
<div class="t" style="left:200px;top:383px">Устройство пешеходных дорожек</div>
<div class="t" style="left:543px;top:383px;width:117px;text-align:center;font-size:12.3px">25.09.2025 14:07</div>
<div class="t" style="left:660px;top:383px;width:118px;text-align:center;font-size:12.3px">25.10.2025 12:38</div>
<div class="t" style="left:778px;top:383px;width:95.5px;text-align:right">0</div>
<div class="t" style="left:44px;top:406px;width:21px;text-align:center;font-size:11px">13</div>
<div class="a" style="left:66px;top:405px;width:10px;height:22px;background:#15365f"></div>
<div class="a" style="left:76px;top:405px;width:10px;height:22px;background:#1b4a80"></div>
<div class="a" style="left:86px;top:405px;width:10px;height:22px;background:#21589b"></div>
<div class="a" style="left:96px;top:405px;width:10px;height:22px;background:#2868b6"></div>
<div class="a" style="left:106px;top:405px;width:10px;height:22px;background:#2e7ad4"></div>
<div class="a" style="left:116px;top:405px;width:10px;height:22px;background:#4a8ed8"></div>
<div class="a" style="left:126px;top:405px;width:753px;height:22px;background:#fff"></div>
<div class="a" style="left:126px;top:426px;width:752px;height:1px;background:repeating-linear-gradient(90deg,#b6b6be 0 3px,transparent 3px 5px)"></div>
<div class="a" style="left:195px;top:405px;width:1px;height:22px;background:repeating-linear-gradient(180deg,#b6b6be 0 3px,transparent 3px 5px)"></div>
<div class="a" style="left:543px;top:405px;width:1px;height:22px;background:repeating-linear-gradient(180deg,#b6b6be 0 3px,transparent 3px 5px)"></div>
<div class="a" style="left:660px;top:405px;width:1px;height:22px;background:repeating-linear-gradient(180deg,#b6b6be 0 3px,transparent 3px 5px)"></div>
<div class="a" style="left:778px;top:405px;width:1px;height:22px;background:repeating-linear-gradient(180deg,#b6b6be 0 3px,transparent 3px 5px)"></div>
<div class="a" style="left:878px;top:405px;width:1px;height:22px;background:repeating-linear-gradient(180deg,#b6b6be 0 3px,transparent 3px 5px)"></div>
<div class="cb" style="left:128px;top:410px"></div>
<div class="t" style="left:150px;top:405px">A220</div>
<div class="t" style="left:200px;top:405px">Установка оконных блоков</div>
<div class="t" style="left:543px;top:405px;width:117px;text-align:center;font-size:12.3px">25.09.2025 14:07</div>
<div class="t" style="left:660px;top:405px;width:118px;text-align:center;font-size:12.3px">26.09.2025 10:32</div>
<div class="t" style="left:778px;top:405px;width:95.5px;text-align:right">0</div>
<div class="t" style="left:44px;top:428px;width:21px;text-align:center;font-size:11px">14</div>
<div class="a" style="left:66px;top:427px;width:10px;height:22px;background:#15365f"></div>
<div class="a" style="left:76px;top:427px;width:10px;height:22px;background:#1b4a80"></div>
<div class="a" style="left:86px;top:427px;width:10px;height:22px;background:#21589b"></div>
<div class="a" style="left:96px;top:427px;width:10px;height:22px;background:#2868b6"></div>
<div class="a" style="left:106px;top:427px;width:10px;height:22px;background:#2e7ad4"></div>
<div class="a" style="left:116px;top:427px;width:10px;height:22px;background:#4a8ed8"></div>
<div class="a" style="left:126px;top:427px;width:753px;height:22px;background:#fff"></div>
<div class="a" style="left:126px;top:448px;width:752px;height:1px;background:repeating-linear-gradient(90deg,#b6b6be 0 3px,transparent 3px 5px)"></div>
<div class="a" style="left:195px;top:427px;width:1px;height:22px;background:repeating-linear-gradient(180deg,#b6b6be 0 3px,transparent 3px 5px)"></div>
<div class="a" style="left:543px;top:427px;width:1px;height:22px;background:repeating-linear-gradient(180deg,#b6b6be 0 3px,transparent 3px 5px)"></div>
<div class="a" style="left:660px;top:427px;width:1px;height:22px;background:repeating-linear-gradient(180deg,#b6b6be 0 3px,transparent 3px 5px)"></div>
<div class="a" style="left:778px;top:427px;width:1px;height:22px;background:repeating-linear-gradient(180deg,#b6b6be 0 3px,transparent 3px 5px)"></div>
<div class="a" style="left:878px;top:427px;width:1px;height:22px;background:repeating-linear-gradient(180deg,#b6b6be 0 3px,transparent 3px 5px)"></div>
<div class="cb" style="left:128px;top:432px"></div>
<div class="t" style="left:150px;top:427px">A230</div>
<div class="t" style="left:200px;top:427px">Монтаж панели ВРУ</div>
<div class="t" style="left:543px;top:427px;width:117px;text-align:center;font-size:12.3px">25.09.2025 14:07</div>
<div class="t" style="left:660px;top:427px;width:118px;text-align:center;font-size:12.3px">25.09.2025 14:48</div>
<div class="t" style="left:778px;top:427px;width:95.5px;text-align:right">0</div>
<div class="t" style="left:44px;top:450px;width:21px;text-align:center;font-size:11px">15</div>
<div class="a" style="left:66px;top:449px;width:10px;height:22px;background:#15365f"></div>
<div class="a" style="left:76px;top:449px;width:10px;height:22px;background:#1b4a80"></div>
<div class="a" style="left:86px;top:449px;width:10px;height:22px;background:#21589b"></div>
<div class="a" style="left:96px;top:449px;width:10px;height:22px;background:#2868b6"></div>
<div class="a" style="left:106px;top:449px;width:10px;height:22px;background:#2e7ad4"></div>
<div class="a" style="left:116px;top:449px;width:10px;height:22px;background:#4a8ed8"></div>
<div class="a" style="left:126px;top:449px;width:753px;height:22px;background:#fff"></div>
<div class="a" style="left:126px;top:470px;width:752px;height:1px;background:repeating-linear-gradient(90deg,#b6b6be 0 3px,transparent 3px 5px)"></div>
<div class="a" style="left:195px;top:449px;width:1px;height:22px;background:repeating-linear-gradient(180deg,#b6b6be 0 3px,transparent 3px 5px)"></div>
<div class="a" style="left:543px;top:449px;width:1px;height:22px;background:repeating-linear-gradient(180deg,#b6b6be 0 3px,transparent 3px 5px)"></div>
<div class="a" style="left:660px;top:449px;width:1px;height:22px;background:repeating-linear-gradient(180deg,#b6b6be 0 3px,transparent 3px 5px)"></div>
<div class="a" style="left:778px;top:449px;width:1px;height:22px;background:repeating-linear-gradient(180deg,#b6b6be 0 3px,transparent 3px 5px)"></div>
<div class="a" style="left:878px;top:449px;width:1px;height:22px;background:repeating-linear-gradient(180deg,#b6b6be 0 3px,transparent 3px 5px)"></div>
<div class="cb" style="left:128px;top:454px"></div>
<div class="t" style="left:150px;top:449px">A240</div>
<div class="t" style="left:200px;top:449px">Прочие работы</div>
<div class="t" style="left:543px;top:449px;width:117px;text-align:center;font-size:12.3px">25.09.2025 14:07</div>
<div class="t" style="left:660px;top:449px;width:118px;text-align:center;font-size:12.3px">19.10.2025 16:31</div>
<div class="t" style="left:778px;top:449px;width:95.5px;text-align:right">0</div>
<div class="t" style="left:44px;top:472px;width:21px;text-align:center;font-size:11px">16</div>
<div class="a" style="left:66px;top:471px;width:10px;height:22px;background:#15365f"></div>
<div class="a" style="left:76px;top:471px;width:10px;height:22px;background:#1b4a80"></div>
<div class="a" style="left:86px;top:471px;width:10px;height:22px;background:#21589b"></div>
<div class="a" style="left:96px;top:471px;width:10px;height:22px;background:#2868b6"></div>
<div class="a" style="left:106px;top:471px;width:10px;height:22px;background:#2e7ad4"></div>
<div class="a" style="left:116px;top:471px;width:763px;height:22px;background:#4a8ed8"></div>
<div class="mn" style="left:116px;top:481.5px"></div>
<div class="cb cbw" style="left:128px;top:477px"></div>
<div class="t g" style="left:150px;top:472px">A250</div>
<div class="t g" style="left:200px;top:472px;width:340px;overflow:hidden;font-size:12.3px">Опора ОП-2п</div>
<div class="t g" style="left:543px;top:472px;width:117px;text-align:center;font-size:12.8px;letter-spacing:-0.1px">25.09.2025 14:07</div>
<div class="t g" style="left:660px;top:472px;width:118px;text-align:center;font-size:12.8px;letter-spacing:-0.1px">17.10.2025 15:02</div>
<div class="t g" style="left:778px;top:472px;width:97px;text-align:right">0</div>
<div class="t" style="left:44px;top:494px;width:21px;text-align:center;font-size:11px">17</div>
<div class="a" style="left:66px;top:493px;width:10px;height:23px;background:#15365f"></div>
<div class="a" style="left:76px;top:493px;width:10px;height:23px;background:#1b4a80"></div>
<div class="a" style="left:86px;top:493px;width:10px;height:23px;background:#21589b"></div>
<div class="a" style="left:96px;top:493px;width:10px;height:23px;background:#2868b6"></div>
<div class="a" style="left:106px;top:493px;width:10px;height:23px;background:#2e7ad4"></div>
<div class="a" style="left:116px;top:493px;width:10px;height:23px;background:#4a8ed8"></div>
<div class="a" style="left:126px;top:493px;width:753px;height:23px;background:#fff"></div>
<div class="a" style="left:126px;top:515px;width:752px;height:1px;background:repeating-linear-gradient(90deg,#b6b6be 0 3px,transparent 3px 5px)"></div>
<div class="a" style="left:195px;top:493px;width:1px;height:23px;background:repeating-linear-gradient(180deg,#b6b6be 0 3px,transparent 3px 5px)"></div>
<div class="a" style="left:543px;top:493px;width:1px;height:23px;background:repeating-linear-gradient(180deg,#b6b6be 0 3px,transparent 3px 5px)"></div>
<div class="a" style="left:660px;top:493px;width:1px;height:23px;background:repeating-linear-gradient(180deg,#b6b6be 0 3px,transparent 3px 5px)"></div>
<div class="a" style="left:778px;top:493px;width:1px;height:23px;background:repeating-linear-gradient(180deg,#b6b6be 0 3px,transparent 3px 5px)"></div>
<div class="a" style="left:878px;top:493px;width:1px;height:23px;background:repeating-linear-gradient(180deg,#b6b6be 0 3px,transparent 3px 5px)"></div>
<div class="cb" style="left:128px;top:498px"></div>
<div class="t" style="left:150px;top:493px">A260</div>
<div class="t" style="left:200px;top:493px">Установка оконных блоков</div>
<div class="t" style="left:543px;top:493px;width:117px;text-align:center;font-size:12.3px">25.09.2025 14:07</div>
<div class="t" style="left:660px;top:493px;width:118px;text-align:center;font-size:12.3px">26.09.2025 10:32</div>
<div class="t" style="left:778px;top:493px;width:95.5px;text-align:right">0</div>
<div class="t" style="left:44px;top:517px;width:21px;text-align:center;font-size:11px">18</div>
<div class="a" style="left:66px;top:516px;width:10px;height:22px;background:#15365f"></div>
<div class="a" style="left:76px;top:516px;width:10px;height:22px;background:#1b4a80"></div>
<div class="a" style="left:86px;top:516px;width:10px;height:22px;background:#21589b"></div>
<div class="a" style="left:96px;top:516px;width:10px;height:22px;background:#2868b6"></div>
<div class="a" style="left:106px;top:516px;width:10px;height:22px;background:#2e7ad4"></div>
<div class="a" style="left:116px;top:516px;width:10px;height:22px;background:#4a8ed8"></div>
<div class="a" style="left:126px;top:516px;width:753px;height:22px;background:#fff"></div>
<div class="a" style="left:126px;top:537px;width:752px;height:1px;background:repeating-linear-gradient(90deg,#b6b6be 0 3px,transparent 3px 5px)"></div>
<div class="a" style="left:195px;top:516px;width:1px;height:22px;background:repeating-linear-gradient(180deg,#b6b6be 0 3px,transparent 3px 5px)"></div>
<div class="a" style="left:543px;top:516px;width:1px;height:22px;background:repeating-linear-gradient(180deg,#b6b6be 0 3px,transparent 3px 5px)"></div>
<div class="a" style="left:660px;top:516px;width:1px;height:22px;background:repeating-linear-gradient(180deg,#b6b6be 0 3px,transparent 3px 5px)"></div>
<div class="a" style="left:778px;top:516px;width:1px;height:22px;background:repeating-linear-gradient(180deg,#b6b6be 0 3px,transparent 3px 5px)"></div>
<div class="a" style="left:878px;top:516px;width:1px;height:22px;background:repeating-linear-gradient(180deg,#b6b6be 0 3px,transparent 3px 5px)"></div>
<div class="cb" style="left:128px;top:521px"></div>
<div class="t" style="left:150px;top:516px">A270</div>
<div class="t" style="left:200px;top:516px">Устройство пешеходных дорожек</div>
<div class="t" style="left:543px;top:516px;width:117px;text-align:center;font-size:12.3px">25.09.2025 14:07</div>
<div class="t" style="left:660px;top:516px;width:118px;text-align:center;font-size:12.3px">17.10.2025 10:20</div>
<div class="t" style="left:778px;top:516px;width:95.5px;text-align:right">0</div>
<div class="t" style="left:44px;top:539px;width:21px;text-align:center;font-size:11px">19</div>
<div class="a" style="left:66px;top:538px;width:10px;height:22px;background:#15365f"></div>
<div class="a" style="left:76px;top:538px;width:10px;height:22px;background:#1b4a80"></div>
<div class="a" style="left:86px;top:538px;width:10px;height:22px;background:#21589b"></div>
<div class="a" style="left:96px;top:538px;width:10px;height:22px;background:#2868b6"></div>
<div class="a" style="left:106px;top:538px;width:10px;height:22px;background:#2e7ad4"></div>
<div class="a" style="left:116px;top:538px;width:10px;height:22px;background:#4a8ed8"></div>
<div class="a" style="left:126px;top:538px;width:753px;height:22px;background:#fff"></div>
<div class="a" style="left:126px;top:559px;width:752px;height:1px;background:repeating-linear-gradient(90deg,#b6b6be 0 3px,transparent 3px 5px)"></div>
<div class="a" style="left:195px;top:538px;width:1px;height:22px;background:repeating-linear-gradient(180deg,#b6b6be 0 3px,transparent 3px 5px)"></div>
<div class="a" style="left:543px;top:538px;width:1px;height:22px;background:repeating-linear-gradient(180deg,#b6b6be 0 3px,transparent 3px 5px)"></div>
<div class="a" style="left:660px;top:538px;width:1px;height:22px;background:repeating-linear-gradient(180deg,#b6b6be 0 3px,transparent 3px 5px)"></div>
<div class="a" style="left:778px;top:538px;width:1px;height:22px;background:repeating-linear-gradient(180deg,#b6b6be 0 3px,transparent 3px 5px)"></div>
<div class="a" style="left:878px;top:538px;width:1px;height:22px;background:repeating-linear-gradient(180deg,#b6b6be 0 3px,transparent 3px 5px)"></div>
<div class="cb" style="left:128px;top:543px"></div>
<div class="t" style="left:150px;top:538px">A280</div>
<div class="t" style="left:200px;top:538px">Монтаж сварных трубопроводов d 50-250</div>
<div class="t" style="left:543px;top:538px;width:117px;text-align:center;font-size:12.3px">25.09.2025 14:07</div>
<div class="t" style="left:660px;top:538px;width:118px;text-align:center;font-size:12.3px">04.10.2025 09:22</div>
<div class="t" style="left:778px;top:538px;width:95.5px;text-align:right">0</div>
<div class="t" style="left:44px;top:561px;width:21px;text-align:center;font-size:11px">20</div>
<div class="a" style="left:66px;top:560px;width:10px;height:22px;background:#15365f"></div>
<div class="a" style="left:76px;top:560px;width:10px;height:22px;background:#1b4a80"></div>
<div class="a" style="left:86px;top:560px;width:10px;height:22px;background:#21589b"></div>
<div class="a" style="left:96px;top:560px;width:10px;height:22px;background:#2868b6"></div>
<div class="a" style="left:106px;top:560px;width:10px;height:22px;background:#2e7ad4"></div>
<div class="a" style="left:116px;top:560px;width:10px;height:22px;background:#4a8ed8"></div>
<div class="a" style="left:126px;top:560px;width:753px;height:22px;background:#fff"></div>
<div class="a" style="left:126px;top:581px;width:752px;height:1px;background:repeating-linear-gradient(90deg,#b6b6be 0 3px,transparent 3px 5px)"></div>
<div class="a" style="left:195px;top:560px;width:1px;height:22px;background:repeating-linear-gradient(180deg,#b6b6be 0 3px,transparent 3px 5px)"></div>
<div class="a" style="left:543px;top:560px;width:1px;height:22px;background:repeating-linear-gradient(180deg,#b6b6be 0 3px,transparent 3px 5px)"></div>
<div class="a" style="left:660px;top:560px;width:1px;height:22px;background:repeating-linear-gradient(180deg,#b6b6be 0 3px,transparent 3px 5px)"></div>
<div class="a" style="left:778px;top:560px;width:1px;height:22px;background:repeating-linear-gradient(180deg,#b6b6be 0 3px,transparent 3px 5px)"></div>
<div class="a" style="left:878px;top:560px;width:1px;height:22px;background:repeating-linear-gradient(180deg,#b6b6be 0 3px,transparent 3px 5px)"></div>
<div class="cb" style="left:128px;top:565px"></div>
<div class="t" style="left:150px;top:560px">A290</div>
<div class="t" style="left:200px;top:560px">Монтаж панели ВРУ</div>
<div class="t" style="left:543px;top:560px;width:117px;text-align:center;font-size:12.3px">25.09.2025 14:07</div>
<div class="t" style="left:660px;top:560px;width:118px;text-align:center;font-size:12.3px">25.09.2025 14:48</div>
<div class="t" style="left:778px;top:560px;width:95.5px;text-align:right">0</div>
<div class="t" style="left:44px;top:583px;width:21px;text-align:center;font-size:11px">21</div>
<div class="a" style="left:66px;top:582px;width:10px;height:22px;background:#15365f"></div>
<div class="a" style="left:76px;top:582px;width:10px;height:22px;background:#1b4a80"></div>
<div class="a" style="left:86px;top:582px;width:10px;height:22px;background:#21589b"></div>
<div class="a" style="left:96px;top:582px;width:10px;height:22px;background:#2868b6"></div>
<div class="a" style="left:106px;top:582px;width:10px;height:22px;background:#2e7ad4"></div>
<div class="a" style="left:116px;top:582px;width:10px;height:22px;background:#4a8ed8"></div>
<div class="a" style="left:126px;top:582px;width:753px;height:22px;background:#fff"></div>
<div class="a" style="left:126px;top:603px;width:752px;height:1px;background:repeating-linear-gradient(90deg,#b6b6be 0 3px,transparent 3px 5px)"></div>
<div class="a" style="left:195px;top:582px;width:1px;height:22px;background:repeating-linear-gradient(180deg,#b6b6be 0 3px,transparent 3px 5px)"></div>
<div class="a" style="left:543px;top:582px;width:1px;height:22px;background:repeating-linear-gradient(180deg,#b6b6be 0 3px,transparent 3px 5px)"></div>
<div class="a" style="left:660px;top:582px;width:1px;height:22px;background:repeating-linear-gradient(180deg,#b6b6be 0 3px,transparent 3px 5px)"></div>
<div class="a" style="left:778px;top:582px;width:1px;height:22px;background:repeating-linear-gradient(180deg,#b6b6be 0 3px,transparent 3px 5px)"></div>
<div class="a" style="left:878px;top:582px;width:1px;height:22px;background:repeating-linear-gradient(180deg,#b6b6be 0 3px,transparent 3px 5px)"></div>
<div class="cb" style="left:128px;top:587px"></div>
<div class="t" style="left:150px;top:582px">A300</div>
<div class="t" style="left:200px;top:582px">Прочие работы</div>
<div class="t" style="left:543px;top:582px;width:117px;text-align:center;font-size:12.3px">25.09.2025 14:07</div>
<div class="t" style="left:660px;top:582px;width:118px;text-align:center;font-size:12.3px">17.10.2025 15:02</div>
<div class="t" style="left:778px;top:582px;width:95.5px;text-align:right">0</div>
<div class="t" style="left:44px;top:605px;width:21px;text-align:center;font-size:11px">22</div>
<div class="a" style="left:66px;top:604px;width:10px;height:22px;background:#15365f"></div>
<div class="a" style="left:76px;top:604px;width:10px;height:22px;background:#1b4a80"></div>
<div class="a" style="left:86px;top:604px;width:10px;height:22px;background:#21589b"></div>
<div class="a" style="left:96px;top:604px;width:10px;height:22px;background:#2868b6"></div>
<div class="a" style="left:106px;top:604px;width:10px;height:22px;background:#2e7ad4"></div>
<div class="a" style="left:116px;top:604px;width:763px;height:22px;background:#4a8ed8"></div>
<div class="mn" style="left:116px;top:614.5px"></div>
<div class="cb cbw" style="left:128px;top:610px"></div>
<div class="t g" style="left:150px;top:605px">A310</div>
<div class="t g" style="left:200px;top:605px;width:340px;overflow:hidden;font-size:12.3px">Опора ОП-3п</div>
<div class="t g" style="left:543px;top:605px;width:117px;text-align:center;font-size:12.8px;letter-spacing:-0.1px">25.09.2025 14:07</div>
<div class="t g" style="left:660px;top:605px;width:118px;text-align:center;font-size:12.8px;letter-spacing:-0.1px">22.10.2025 17:37</div>
<div class="t g" style="left:778px;top:605px;width:97px;text-align:right">0</div>
<div class="t" style="left:44px;top:627px;width:21px;text-align:center;font-size:11px">23</div>
<div class="a" style="left:66px;top:626px;width:10px;height:22px;background:#15365f"></div>
<div class="a" style="left:76px;top:626px;width:10px;height:22px;background:#1b4a80"></div>
<div class="a" style="left:86px;top:626px;width:10px;height:22px;background:#21589b"></div>
<div class="a" style="left:96px;top:626px;width:10px;height:22px;background:#2868b6"></div>
<div class="a" style="left:106px;top:626px;width:10px;height:22px;background:#2e7ad4"></div>
<div class="a" style="left:116px;top:626px;width:10px;height:22px;background:#4a8ed8"></div>
<div class="a" style="left:126px;top:626px;width:753px;height:22px;background:#fff"></div>
<div class="a" style="left:126px;top:647px;width:752px;height:1px;background:repeating-linear-gradient(90deg,#b6b6be 0 3px,transparent 3px 5px)"></div>
<div class="a" style="left:195px;top:626px;width:1px;height:22px;background:repeating-linear-gradient(180deg,#b6b6be 0 3px,transparent 3px 5px)"></div>
<div class="a" style="left:543px;top:626px;width:1px;height:22px;background:repeating-linear-gradient(180deg,#b6b6be 0 3px,transparent 3px 5px)"></div>
<div class="a" style="left:660px;top:626px;width:1px;height:22px;background:repeating-linear-gradient(180deg,#b6b6be 0 3px,transparent 3px 5px)"></div>
<div class="a" style="left:778px;top:626px;width:1px;height:22px;background:repeating-linear-gradient(180deg,#b6b6be 0 3px,transparent 3px 5px)"></div>
<div class="a" style="left:878px;top:626px;width:1px;height:22px;background:repeating-linear-gradient(180deg,#b6b6be 0 3px,transparent 3px 5px)"></div>
<div class="cb" style="left:128px;top:631px"></div>
<div class="t" style="left:150px;top:626px">A320</div>
<div class="t" style="left:200px;top:626px">Устройство пешеходных дорожек</div>
<div class="t" style="left:543px;top:626px;width:117px;text-align:center;font-size:12.3px">25.09.2025 14:07</div>
<div class="t" style="left:660px;top:626px;width:118px;text-align:center;font-size:12.3px">22.10.2025 14:08</div>
<div class="t" style="left:778px;top:626px;width:95.5px;text-align:right">0</div>
<div class="t" style="left:44px;top:649px;width:21px;text-align:center;font-size:11px">24</div>
<div class="a" style="left:66px;top:648px;width:10px;height:22px;background:#15365f"></div>
<div class="a" style="left:76px;top:648px;width:10px;height:22px;background:#1b4a80"></div>
<div class="a" style="left:86px;top:648px;width:10px;height:22px;background:#21589b"></div>
<div class="a" style="left:96px;top:648px;width:10px;height:22px;background:#2868b6"></div>
<div class="a" style="left:106px;top:648px;width:10px;height:22px;background:#2e7ad4"></div>
<div class="a" style="left:116px;top:648px;width:10px;height:22px;background:#4a8ed8"></div>
<div class="a" style="left:126px;top:648px;width:753px;height:22px;background:#fff"></div>
<div class="a" style="left:126px;top:669px;width:752px;height:1px;background:repeating-linear-gradient(90deg,#b6b6be 0 3px,transparent 3px 5px)"></div>
<div class="a" style="left:195px;top:648px;width:1px;height:22px;background:repeating-linear-gradient(180deg,#b6b6be 0 3px,transparent 3px 5px)"></div>
<div class="a" style="left:543px;top:648px;width:1px;height:22px;background:repeating-linear-gradient(180deg,#b6b6be 0 3px,transparent 3px 5px)"></div>
<div class="a" style="left:660px;top:648px;width:1px;height:22px;background:repeating-linear-gradient(180deg,#b6b6be 0 3px,transparent 3px 5px)"></div>
<div class="a" style="left:778px;top:648px;width:1px;height:22px;background:repeating-linear-gradient(180deg,#b6b6be 0 3px,transparent 3px 5px)"></div>
<div class="a" style="left:878px;top:648px;width:1px;height:22px;background:repeating-linear-gradient(180deg,#b6b6be 0 3px,transparent 3px 5px)"></div>
<div class="cb" style="left:128px;top:653px"></div>
<div class="t" style="left:150px;top:648px">A330</div>
<div class="t" style="left:200px;top:648px">Установка оконных блоков</div>
<div class="t" style="left:543px;top:648px;width:117px;text-align:center;font-size:12.3px">25.09.2025 14:07</div>
<div class="t" style="left:660px;top:648px;width:118px;text-align:center;font-size:12.3px">26.09.2025 10:32</div>
<div class="t" style="left:778px;top:648px;width:95.5px;text-align:right">0</div>
<div class="t" style="left:44px;top:671px;width:21px;text-align:center;font-size:11px">25</div>
<div class="a" style="left:66px;top:670px;width:10px;height:22px;background:#15365f"></div>
<div class="a" style="left:76px;top:670px;width:10px;height:22px;background:#1b4a80"></div>
<div class="a" style="left:86px;top:670px;width:10px;height:22px;background:#21589b"></div>
<div class="a" style="left:96px;top:670px;width:10px;height:22px;background:#2868b6"></div>
<div class="a" style="left:106px;top:670px;width:10px;height:22px;background:#2e7ad4"></div>
<div class="a" style="left:116px;top:670px;width:10px;height:22px;background:#4a8ed8"></div>
<div class="a" style="left:126px;top:670px;width:753px;height:22px;background:#fff"></div>
<div class="a" style="left:126px;top:691px;width:752px;height:1px;background:repeating-linear-gradient(90deg,#b6b6be 0 3px,transparent 3px 5px)"></div>
<div class="a" style="left:195px;top:670px;width:1px;height:22px;background:repeating-linear-gradient(180deg,#b6b6be 0 3px,transparent 3px 5px)"></div>
<div class="a" style="left:543px;top:670px;width:1px;height:22px;background:repeating-linear-gradient(180deg,#b6b6be 0 3px,transparent 3px 5px)"></div>
<div class="a" style="left:660px;top:670px;width:1px;height:22px;background:repeating-linear-gradient(180deg,#b6b6be 0 3px,transparent 3px 5px)"></div>
<div class="a" style="left:778px;top:670px;width:1px;height:22px;background:repeating-linear-gradient(180deg,#b6b6be 0 3px,transparent 3px 5px)"></div>
<div class="a" style="left:878px;top:670px;width:1px;height:22px;background:repeating-linear-gradient(180deg,#b6b6be 0 3px,transparent 3px 5px)"></div>
<div class="cb" style="left:128px;top:675px"></div>
<div class="t" style="left:150px;top:670px">A340</div>
<div class="t" style="left:200px;top:670px">Монтаж панели ВРУ</div>
<div class="t" style="left:543px;top:670px;width:117px;text-align:center;font-size:12.3px">25.09.2025 14:07</div>
<div class="t" style="left:660px;top:670px;width:118px;text-align:center;font-size:12.3px">25.09.2025 14:48</div>
<div class="t" style="left:778px;top:670px;width:95.5px;text-align:right">0</div>
<div class="t" style="left:44px;top:693px;width:21px;text-align:center;font-size:11px">26</div>
<div class="a" style="left:66px;top:692px;width:10px;height:22px;background:#15365f"></div>
<div class="a" style="left:76px;top:692px;width:10px;height:22px;background:#1b4a80"></div>
<div class="a" style="left:86px;top:692px;width:10px;height:22px;background:#21589b"></div>
<div class="a" style="left:96px;top:692px;width:10px;height:22px;background:#2868b6"></div>
<div class="a" style="left:106px;top:692px;width:10px;height:22px;background:#2e7ad4"></div>
<div class="a" style="left:116px;top:692px;width:10px;height:22px;background:#4a8ed8"></div>
<div class="a" style="left:126px;top:692px;width:753px;height:22px;background:#fff"></div>
<div class="a" style="left:126px;top:713px;width:752px;height:1px;background:repeating-linear-gradient(90deg,#b6b6be 0 3px,transparent 3px 5px)"></div>
<div class="a" style="left:195px;top:692px;width:1px;height:22px;background:repeating-linear-gradient(180deg,#b6b6be 0 3px,transparent 3px 5px)"></div>
<div class="a" style="left:543px;top:692px;width:1px;height:22px;background:repeating-linear-gradient(180deg,#b6b6be 0 3px,transparent 3px 5px)"></div>
<div class="a" style="left:660px;top:692px;width:1px;height:22px;background:repeating-linear-gradient(180deg,#b6b6be 0 3px,transparent 3px 5px)"></div>
<div class="a" style="left:778px;top:692px;width:1px;height:22px;background:repeating-linear-gradient(180deg,#b6b6be 0 3px,transparent 3px 5px)"></div>
<div class="a" style="left:878px;top:692px;width:1px;height:22px;background:repeating-linear-gradient(180deg,#b6b6be 0 3px,transparent 3px 5px)"></div>
<div class="cb" style="left:128px;top:697px"></div>
<div class="t" style="left:150px;top:692px">A350</div>
<div class="t" style="left:200px;top:692px">Прочие работы</div>
<div class="t" style="left:543px;top:692px;width:117px;text-align:center;font-size:12.3px">25.09.2025 14:07</div>
<div class="t" style="left:660px;top:692px;width:118px;text-align:center;font-size:12.3px">22.10.2025 17:37</div>
<div class="t" style="left:778px;top:692px;width:95.5px;text-align:right">0</div>
<div class="t" style="left:44px;top:715px;width:21px;text-align:center;font-size:11px">27</div>
<div class="a" style="left:66px;top:714px;width:10px;height:22px;background:#15365f"></div>
<div class="a" style="left:76px;top:714px;width:10px;height:22px;background:#1b4a80"></div>
<div class="a" style="left:86px;top:714px;width:10px;height:22px;background:#21589b"></div>
<div class="a" style="left:96px;top:714px;width:10px;height:22px;background:#2868b6"></div>
<div class="a" style="left:106px;top:714px;width:773px;height:22px;background:#2e7ad4"></div>
<div class="mn" style="left:106px;top:724.5px"></div>
<div class="cb cbw" style="left:118px;top:720px"></div>
<div class="t g" style="left:140px;top:715px">A360</div>
<div class="t g" style="left:200px;top:715px;width:340px;overflow:hidden;font-size:12.3px">02.09.02.5 02-02-2-02 крайние опоры</div>
<div class="t g" style="left:543px;top:715px;width:117px;text-align:center;font-size:12.8px;letter-spacing:-0.1px">25.09.2025 14:07</div>
<div class="t g" style="left:660px;top:715px;width:118px;text-align:center;font-size:12.8px;letter-spacing:-0.1px">10.02.2026 17:16</div>
<div class="t g" style="left:778px;top:715px;width:97px;text-align:right">0</div>
<div class="t" style="left:44px;top:737px;width:21px;text-align:center;font-size:11px">28</div>
<div class="a" style="left:66px;top:736px;width:10px;height:22px;background:#15365f"></div>
<div class="a" style="left:76px;top:736px;width:10px;height:22px;background:#1b4a80"></div>
<div class="a" style="left:86px;top:736px;width:10px;height:22px;background:#21589b"></div>
<div class="a" style="left:96px;top:736px;width:10px;height:22px;background:#2868b6"></div>
<div class="a" style="left:106px;top:736px;width:10px;height:22px;background:#2e7ad4"></div>
<div class="a" style="left:116px;top:736px;width:763px;height:22px;background:#4a8ed8"></div>
<div class="mn" style="left:116px;top:746.5px"></div>
<div class="cb cbw" style="left:128px;top:742px"></div>
<div class="t g" style="left:150px;top:737px">A370</div>
<div class="t g" style="left:200px;top:737px;width:340px;overflow:hidden;font-size:12.3px">Опора ОК-1л</div>
<div class="t g" style="left:543px;top:737px;width:117px;text-align:center;font-size:12.8px;letter-spacing:-0.1px">25.09.2025 14:07</div>
<div class="t g" style="left:660px;top:737px;width:118px;text-align:center;font-size:12.8px;letter-spacing:-0.1px">15.11.2025 17:10</div>
<div class="t g" style="left:778px;top:737px;width:97px;text-align:right">0</div>
<div class="t" style="left:44px;top:759px;width:21px;text-align:center;font-size:11px">29</div>
<div class="a" style="left:66px;top:758px;width:10px;height:22px;background:#15365f"></div>
<div class="a" style="left:76px;top:758px;width:10px;height:22px;background:#1b4a80"></div>
<div class="a" style="left:86px;top:758px;width:10px;height:22px;background:#21589b"></div>
<div class="a" style="left:96px;top:758px;width:10px;height:22px;background:#2868b6"></div>
<div class="a" style="left:106px;top:758px;width:10px;height:22px;background:#2e7ad4"></div>
<div class="a" style="left:116px;top:758px;width:10px;height:22px;background:#4a8ed8"></div>
<div class="a" style="left:126px;top:758px;width:753px;height:22px;background:#fff"></div>
<div class="a" style="left:126px;top:779px;width:752px;height:1px;background:repeating-linear-gradient(90deg,#b6b6be 0 3px,transparent 3px 5px)"></div>
<div class="a" style="left:195px;top:758px;width:1px;height:22px;background:repeating-linear-gradient(180deg,#b6b6be 0 3px,transparent 3px 5px)"></div>
<div class="a" style="left:543px;top:758px;width:1px;height:22px;background:repeating-linear-gradient(180deg,#b6b6be 0 3px,transparent 3px 5px)"></div>
<div class="a" style="left:660px;top:758px;width:1px;height:22px;background:repeating-linear-gradient(180deg,#b6b6be 0 3px,transparent 3px 5px)"></div>
<div class="a" style="left:778px;top:758px;width:1px;height:22px;background:repeating-linear-gradient(180deg,#b6b6be 0 3px,transparent 3px 5px)"></div>
<div class="a" style="left:878px;top:758px;width:1px;height:22px;background:repeating-linear-gradient(180deg,#b6b6be 0 3px,transparent 3px 5px)"></div>
<div class="cb" style="left:128px;top:763px"></div>
<div class="t" style="left:150px;top:758px">A380</div>
<div class="t" style="left:200px;top:758px">Установка оконных блоков</div>
<div class="t" style="left:543px;top:758px;width:117px;text-align:center;font-size:12.3px">25.09.2025 14:07</div>
<div class="t" style="left:660px;top:758px;width:118px;text-align:center;font-size:12.3px">26.09.2025 16:52</div>
<div class="t" style="left:778px;top:758px;width:95.5px;text-align:right">0</div>
<div class="t" style="left:44px;top:781px;width:21px;text-align:center;font-size:11px">30</div>
<div class="a" style="left:66px;top:780px;width:10px;height:22px;background:#15365f"></div>
<div class="a" style="left:76px;top:780px;width:10px;height:22px;background:#1b4a80"></div>
<div class="a" style="left:86px;top:780px;width:10px;height:22px;background:#21589b"></div>
<div class="a" style="left:96px;top:780px;width:10px;height:22px;background:#2868b6"></div>
<div class="a" style="left:106px;top:780px;width:10px;height:22px;background:#2e7ad4"></div>
<div class="a" style="left:116px;top:780px;width:10px;height:22px;background:#4a8ed8"></div>
<div class="a" style="left:126px;top:780px;width:753px;height:22px;background:#fff"></div>
<div class="a" style="left:126px;top:801px;width:752px;height:1px;background:repeating-linear-gradient(90deg,#b6b6be 0 3px,transparent 3px 5px)"></div>
<div class="a" style="left:195px;top:780px;width:1px;height:22px;background:repeating-linear-gradient(180deg,#b6b6be 0 3px,transparent 3px 5px)"></div>
<div class="a" style="left:543px;top:780px;width:1px;height:22px;background:repeating-linear-gradient(180deg,#b6b6be 0 3px,transparent 3px 5px)"></div>
<div class="a" style="left:660px;top:780px;width:1px;height:22px;background:repeating-linear-gradient(180deg,#b6b6be 0 3px,transparent 3px 5px)"></div>
<div class="a" style="left:778px;top:780px;width:1px;height:22px;background:repeating-linear-gradient(180deg,#b6b6be 0 3px,transparent 3px 5px)"></div>
<div class="a" style="left:878px;top:780px;width:1px;height:22px;background:repeating-linear-gradient(180deg,#b6b6be 0 3px,transparent 3px 5px)"></div>
<div class="cb" style="left:128px;top:785px"></div>
<div class="t" style="left:150px;top:780px">A390</div>
<div class="t" style="left:200px;top:780px">Устройство пешеходных дорожек</div>
<div class="t" style="left:543px;top:780px;width:117px;text-align:center;font-size:12.3px">25.09.2025 14:07</div>
<div class="t" style="left:660px;top:780px;width:118px;text-align:center;font-size:12.3px">12.11.2025 09:05</div>
<div class="t" style="left:778px;top:780px;width:95.5px;text-align:right">0</div>
<div class="t" style="left:44px;top:803px;width:21px;text-align:center;font-size:11px">31</div>
<div class="a" style="left:66px;top:802px;width:10px;height:22px;background:#15365f"></div>
<div class="a" style="left:76px;top:802px;width:10px;height:22px;background:#1b4a80"></div>
<div class="a" style="left:86px;top:802px;width:10px;height:22px;background:#21589b"></div>
<div class="a" style="left:96px;top:802px;width:10px;height:22px;background:#2868b6"></div>
<div class="a" style="left:106px;top:802px;width:10px;height:22px;background:#2e7ad4"></div>
<div class="a" style="left:116px;top:802px;width:10px;height:22px;background:#4a8ed8"></div>
<div class="a" style="left:126px;top:802px;width:753px;height:22px;background:#fff"></div>
<div class="a" style="left:126px;top:823px;width:752px;height:1px;background:repeating-linear-gradient(90deg,#b6b6be 0 3px,transparent 3px 5px)"></div>
<div class="a" style="left:195px;top:802px;width:1px;height:22px;background:repeating-linear-gradient(180deg,#b6b6be 0 3px,transparent 3px 5px)"></div>
<div class="a" style="left:543px;top:802px;width:1px;height:22px;background:repeating-linear-gradient(180deg,#b6b6be 0 3px,transparent 3px 5px)"></div>
<div class="a" style="left:660px;top:802px;width:1px;height:22px;background:repeating-linear-gradient(180deg,#b6b6be 0 3px,transparent 3px 5px)"></div>
<div class="a" style="left:778px;top:802px;width:1px;height:22px;background:repeating-linear-gradient(180deg,#b6b6be 0 3px,transparent 3px 5px)"></div>
<div class="a" style="left:878px;top:802px;width:1px;height:22px;background:repeating-linear-gradient(180deg,#b6b6be 0 3px,transparent 3px 5px)"></div>
<div class="cb" style="left:128px;top:807px"></div>
<div class="t" style="left:150px;top:802px">A400</div>
<div class="t" style="left:200px;top:802px">Монтаж панели ВРУ</div>
<div class="t" style="left:543px;top:802px;width:117px;text-align:center;font-size:12.3px">25.09.2025 14:07</div>
<div class="t" style="left:660px;top:802px;width:118px;text-align:center;font-size:12.3px">25.09.2025 16:40</div>
<div class="t" style="left:778px;top:802px;width:95.5px;text-align:right">0</div>
<div class="t" style="left:44px;top:825px;width:21px;text-align:center;font-size:11px">32</div>
<div class="a" style="left:66px;top:824px;width:10px;height:22px;background:#15365f"></div>
<div class="a" style="left:76px;top:824px;width:10px;height:22px;background:#1b4a80"></div>
<div class="a" style="left:86px;top:824px;width:10px;height:22px;background:#21589b"></div>
<div class="a" style="left:96px;top:824px;width:10px;height:22px;background:#2868b6"></div>
<div class="a" style="left:106px;top:824px;width:10px;height:22px;background:#2e7ad4"></div>
<div class="a" style="left:116px;top:824px;width:10px;height:22px;background:#4a8ed8"></div>
<div class="a" style="left:126px;top:824px;width:753px;height:22px;background:#fff"></div>
<div class="a" style="left:126px;top:845px;width:752px;height:1px;background:repeating-linear-gradient(90deg,#b6b6be 0 3px,transparent 3px 5px)"></div>
<div class="a" style="left:195px;top:824px;width:1px;height:22px;background:repeating-linear-gradient(180deg,#b6b6be 0 3px,transparent 3px 5px)"></div>
<div class="a" style="left:543px;top:824px;width:1px;height:22px;background:repeating-linear-gradient(180deg,#b6b6be 0 3px,transparent 3px 5px)"></div>
<div class="a" style="left:660px;top:824px;width:1px;height:22px;background:repeating-linear-gradient(180deg,#b6b6be 0 3px,transparent 3px 5px)"></div>
<div class="a" style="left:778px;top:824px;width:1px;height:22px;background:repeating-linear-gradient(180deg,#b6b6be 0 3px,transparent 3px 5px)"></div>
<div class="a" style="left:878px;top:824px;width:1px;height:22px;background:repeating-linear-gradient(180deg,#b6b6be 0 3px,transparent 3px 5px)"></div>
<div class="cb" style="left:128px;top:829px"></div>
<div class="t" style="left:150px;top:824px">A410</div>
<div class="t" style="left:200px;top:824px">Прочие работы</div>
<div class="t" style="left:543px;top:824px;width:117px;text-align:center;font-size:12.3px">25.09.2025 14:07</div>
<div class="t" style="left:660px;top:824px;width:118px;text-align:center;font-size:12.3px">15.11.2025 17:10</div>
<div class="t" style="left:778px;top:824px;width:95.5px;text-align:right">0</div>
<div class="t" style="left:44px;top:847px;width:21px;text-align:center;font-size:11px">33</div>
<div class="a" style="left:66px;top:846px;width:10px;height:22px;background:#15365f"></div>
<div class="a" style="left:76px;top:846px;width:10px;height:22px;background:#1b4a80"></div>
<div class="a" style="left:86px;top:846px;width:10px;height:22px;background:#21589b"></div>
<div class="a" style="left:96px;top:846px;width:10px;height:22px;background:#2868b6"></div>
<div class="a" style="left:106px;top:846px;width:10px;height:22px;background:#2e7ad4"></div>
<div class="a" style="left:116px;top:846px;width:763px;height:22px;background:#4a8ed8"></div>
<div class="mn" style="left:116px;top:856.5px"></div>
<div class="cb cbw" style="left:128px;top:852px"></div>
<div class="t g" style="left:150px;top:847px">A420</div>
<div class="t g" style="left:200px;top:847px;width:340px;overflow:hidden;font-size:12.3px">Опора ОК-4л</div>
<div class="t g" style="left:543px;top:847px;width:117px;text-align:center;font-size:12.8px;letter-spacing:-0.1px">25.09.2025 14:07</div>
<div class="t g" style="left:660px;top:847px;width:118px;text-align:center;font-size:12.8px;letter-spacing:-0.1px">10.02.2026 17:16</div>
<div class="t g" style="left:778px;top:847px;width:97px;text-align:right">0</div>
<div class="t" style="left:44px;top:869px;width:21px;text-align:center;font-size:11px">34</div>
<div class="a" style="left:66px;top:868px;width:10px;height:22px;background:#15365f"></div>
<div class="a" style="left:76px;top:868px;width:10px;height:22px;background:#1b4a80"></div>
<div class="a" style="left:86px;top:868px;width:10px;height:22px;background:#21589b"></div>
<div class="a" style="left:96px;top:868px;width:10px;height:22px;background:#2868b6"></div>
<div class="a" style="left:106px;top:868px;width:10px;height:22px;background:#2e7ad4"></div>
<div class="a" style="left:116px;top:868px;width:10px;height:22px;background:#4a8ed8"></div>
<div class="a" style="left:126px;top:868px;width:753px;height:22px;background:#fff"></div>
<div class="a" style="left:126px;top:889px;width:752px;height:1px;background:repeating-linear-gradient(90deg,#b6b6be 0 3px,transparent 3px 5px)"></div>
<div class="a" style="left:195px;top:868px;width:1px;height:22px;background:repeating-linear-gradient(180deg,#b6b6be 0 3px,transparent 3px 5px)"></div>
<div class="a" style="left:543px;top:868px;width:1px;height:22px;background:repeating-linear-gradient(180deg,#b6b6be 0 3px,transparent 3px 5px)"></div>
<div class="a" style="left:660px;top:868px;width:1px;height:22px;background:repeating-linear-gradient(180deg,#b6b6be 0 3px,transparent 3px 5px)"></div>
<div class="a" style="left:778px;top:868px;width:1px;height:22px;background:repeating-linear-gradient(180deg,#b6b6be 0 3px,transparent 3px 5px)"></div>
<div class="a" style="left:878px;top:868px;width:1px;height:22px;background:repeating-linear-gradient(180deg,#b6b6be 0 3px,transparent 3px 5px)"></div>
<div class="cb" style="left:128px;top:873px"></div>
<div class="t" style="left:150px;top:868px">A430</div>
<div class="t" style="left:200px;top:868px">Установка оконных блоков</div>
<div class="t" style="left:543px;top:868px;width:117px;text-align:center;font-size:12.3px">25.09.2025 14:07</div>
<div class="t" style="left:660px;top:868px;width:118px;text-align:center;font-size:12.3px">28.09.2025 10:17</div>
<div class="t" style="left:778px;top:868px;width:95.5px;text-align:right">0</div>
<div class="t" style="left:44px;top:891px;width:21px;text-align:center;font-size:11px">35</div>
<div class="a" style="left:66px;top:890px;width:10px;height:22px;background:#15365f"></div>
<div class="a" style="left:76px;top:890px;width:10px;height:22px;background:#1b4a80"></div>
<div class="a" style="left:86px;top:890px;width:10px;height:22px;background:#21589b"></div>
<div class="a" style="left:96px;top:890px;width:10px;height:22px;background:#2868b6"></div>
<div class="a" style="left:106px;top:890px;width:10px;height:22px;background:#2e7ad4"></div>
<div class="a" style="left:116px;top:890px;width:10px;height:22px;background:#4a8ed8"></div>
<div class="a" style="left:126px;top:890px;width:753px;height:22px;background:#fff"></div>
<div class="a" style="left:126px;top:911px;width:752px;height:1px;background:repeating-linear-gradient(90deg,#b6b6be 0 3px,transparent 3px 5px)"></div>
<div class="a" style="left:195px;top:890px;width:1px;height:22px;background:repeating-linear-gradient(180deg,#b6b6be 0 3px,transparent 3px 5px)"></div>
<div class="a" style="left:543px;top:890px;width:1px;height:22px;background:repeating-linear-gradient(180deg,#b6b6be 0 3px,transparent 3px 5px)"></div>
<div class="a" style="left:660px;top:890px;width:1px;height:22px;background:repeating-linear-gradient(180deg,#b6b6be 0 3px,transparent 3px 5px)"></div>
<div class="a" style="left:778px;top:890px;width:1px;height:22px;background:repeating-linear-gradient(180deg,#b6b6be 0 3px,transparent 3px 5px)"></div>
<div class="a" style="left:878px;top:890px;width:1px;height:22px;background:repeating-linear-gradient(180deg,#b6b6be 0 3px,transparent 3px 5px)"></div>
<div class="cb" style="left:128px;top:895px"></div>
<div class="t" style="left:150px;top:890px">A440</div>
<div class="t" style="left:200px;top:890px">Устройство пешеходных дорожек</div>
<div class="t" style="left:543px;top:890px;width:117px;text-align:center;font-size:12.3px">25.09.2025 14:07</div>
<div class="t" style="left:660px;top:890px;width:118px;text-align:center;font-size:12.3px">02.01.2026 10:43</div>
<div class="t" style="left:778px;top:890px;width:95.5px;text-align:right">0</div>
<div class="a" style="left:879px;top:91px;width:10px;height:818px;background:#fff"></div>
<div class="a" style="left:883px;top:141px;width:6px;height:768px;background:#f3f3f5"></div>
<div class="a" style="left:883px;top:91px;width:6px;height:100px;background:#dcdcdf;border-radius:3px"></div>
<div class="a" style="left:879px;top:273px;width:4px;height:22px;background:#fefbcc"></div>
<div class="a" style="left:889px;top:46px;width:6px;height:863px;background:#b5b6bb"></div>
<div class="a" style="left:895px;top:90px;width:1022px;height:819px;overflow:hidden"><div class="a" style="left:-895px;top:-90px;width:1917px;height:910px">
<div class="a" style="left:895px;top:90px;width:1022px;height:50px;background:#fff"></div>
<div class="a" style="left:895px;top:105px;width:1022px;height:2px;background:#d6d6da"></div>
<div class="a" style="left:895px;top:122px;width:1022px;height:2px;background:#d6d6da"></div>
<div class="a" style="left:895px;top:139px;width:1022px;height:2px;background:#d6d6da"></div>
<div class="a" style="left:1735px;top:90px;width:1px;height:50px;background:#d0d0d4"></div>
<div class="hd" style="left:1215px;top:90px;width:200px">2025</div>
<div class="hd" style="left:1728px;top:90px;width:200px">2026</div>
<div class="a" style="left:985px;top:106px;width:1px;height:17px;background:#d0d0d4"></div>
<div class="a" style="left:1238px;top:106px;width:1px;height:17px;background:#d0d0d4"></div>
<div class="a" style="left:1482px;top:106px;width:1px;height:17px;background:#d0d0d4"></div>
<div class="hd" style="left:1007.5px;top:107px;width:200px">октябрь</div>
<div class="hd" style="left:1260px;top:107px;width:200px">ноябрь</div>
<div class="hd" style="left:1505px;top:107px;width:200px">декабрь</div>
<div class="hd" style="left:1758px;top:107px;width:200px">январь</div>
<div class="hd" style="left:832.6px;top:124px;width:100px">15 - 21</div>
<div class="a" style="left:911px;top:123px;width:1px;height:17px;background:#d0d0d4"></div>
<div class="hd" style="left:889.8px;top:124px;width:100px">22 - 28</div>
<div class="a" style="left:968px;top:123px;width:1px;height:17px;background:#d0d0d4"></div>
<div class="hd" style="left:946.9px;top:124px;width:100px">29 - 5</div>
<div class="a" style="left:1025px;top:123px;width:1px;height:17px;background:#d0d0d4"></div>
<div class="hd" style="left:1004.0px;top:124px;width:100px">6 - 12</div>
<div class="a" style="left:1083px;top:123px;width:1px;height:17px;background:#d0d0d4"></div>
<div class="hd" style="left:1061.2px;top:124px;width:100px">13 - 19</div>
<div class="a" style="left:1140px;top:123px;width:1px;height:17px;background:#d0d0d4"></div>
<div class="hd" style="left:1118.3px;top:124px;width:100px">20 - 26</div>
<div class="a" style="left:1197px;top:123px;width:1px;height:17px;background:#d0d0d4"></div>
<div class="hd" style="left:1175.4px;top:124px;width:100px">27 - 2</div>
<div class="a" style="left:1254px;top:123px;width:1px;height:17px;background:#d0d0d4"></div>
<div class="hd" style="left:1232.5px;top:124px;width:100px">3 - 9</div>
<div class="a" style="left:1311px;top:123px;width:1px;height:17px;background:#d0d0d4"></div>
<div class="hd" style="left:1289.7px;top:124px;width:100px">10 - 16</div>
<div class="a" style="left:1368px;top:123px;width:1px;height:17px;background:#d0d0d4"></div>
<div class="hd" style="left:1346.8px;top:124px;width:100px">17 - 23</div>
<div class="a" style="left:1425px;top:123px;width:1px;height:17px;background:#d0d0d4"></div>
<div class="hd" style="left:1403.9px;top:124px;width:100px">24 - 30</div>
<div class="a" style="left:1482px;top:123px;width:1px;height:17px;background:#d0d0d4"></div>
<div class="hd" style="left:1461.1px;top:124px;width:100px">1 - 7</div>
<div class="a" style="left:1540px;top:123px;width:1px;height:17px;background:#d0d0d4"></div>
<div class="hd" style="left:1518.2px;top:124px;width:100px">8 - 14</div>
<div class="a" style="left:1597px;top:123px;width:1px;height:17px;background:#d0d0d4"></div>
<div class="hd" style="left:1575.3px;top:124px;width:100px">15 - 21</div>
<div class="a" style="left:1654px;top:123px;width:1px;height:17px;background:#d0d0d4"></div>
<div class="hd" style="left:1632.5px;top:124px;width:100px">22 - 28</div>
<div class="a" style="left:1711px;top:123px;width:1px;height:17px;background:#d0d0d4"></div>
<div class="hd" style="left:1689.6px;top:124px;width:100px">29 - 4</div>
<div class="a" style="left:1768px;top:123px;width:1px;height:17px;background:#d0d0d4"></div>
<div class="hd" style="left:1746.7px;top:124px;width:100px">5 - 11</div>
<div class="a" style="left:1825px;top:123px;width:1px;height:17px;background:#d0d0d4"></div>
<div class="hd" style="left:1803.8px;top:124px;width:100px">12 - 18</div>
<div class="a" style="left:1882px;top:123px;width:1px;height:17px;background:#d0d0d4"></div>
<div class="hd" style="left:1861.0px;top:124px;width:100px">19 - 25</div>
<div class="a" style="left:895px;top:162px;width:1019px;height:1px;background:repeating-linear-gradient(90deg,#e8e8eb 0 3px,transparent 3px 6.05px);background-position:4.5px 0"></div>
<div class="a" style="left:895px;top:184px;width:1019px;height:1px;background:repeating-linear-gradient(90deg,#e8e8eb 0 3px,transparent 3px 6.05px);background-position:4.5px 0"></div>
<div class="a" style="left:895px;top:206px;width:1019px;height:1px;background:repeating-linear-gradient(90deg,#e8e8eb 0 3px,transparent 3px 6.05px);background-position:4.5px 0"></div>
<div class="a" style="left:895px;top:228px;width:1019px;height:1px;background:repeating-linear-gradient(90deg,#e8e8eb 0 3px,transparent 3px 6.05px);background-position:4.5px 0"></div>
<div class="a" style="left:895px;top:250px;width:1019px;height:1px;background:repeating-linear-gradient(90deg,#e8e8eb 0 3px,transparent 3px 6.05px);background-position:4.5px 0"></div>
<div class="a" style="left:895px;top:272px;width:1019px;height:1px;background:repeating-linear-gradient(90deg,#e8e8eb 0 3px,transparent 3px 6.05px);background-position:4.5px 0"></div>
<div class="a" style="left:895px;top:273px;width:1022px;height:22px;background:#fefbcc"></div>
<div class="a" style="left:895px;top:294px;width:1019px;height:1px;background:repeating-linear-gradient(90deg,#e8e8eb 0 3px,transparent 3px 6.05px);background-position:4.5px 0"></div>
<div class="a" style="left:895px;top:316px;width:1019px;height:1px;background:repeating-linear-gradient(90deg,#e8e8eb 0 3px,transparent 3px 6.05px);background-position:4.5px 0"></div>
<div class="a" style="left:895px;top:338px;width:1019px;height:1px;background:repeating-linear-gradient(90deg,#e8e8eb 0 3px,transparent 3px 6.05px);background-position:4.5px 0"></div>
<div class="a" style="left:895px;top:360px;width:1019px;height:1px;background:repeating-linear-gradient(90deg,#e8e8eb 0 3px,transparent 3px 6.05px);background-position:4.5px 0"></div>
<div class="a" style="left:895px;top:382px;width:1019px;height:1px;background:repeating-linear-gradient(90deg,#e8e8eb 0 3px,transparent 3px 6.05px);background-position:4.5px 0"></div>
<div class="a" style="left:895px;top:404px;width:1019px;height:1px;background:repeating-linear-gradient(90deg,#e8e8eb 0 3px,transparent 3px 6.05px);background-position:4.5px 0"></div>
<div class="a" style="left:895px;top:426px;width:1019px;height:1px;background:repeating-linear-gradient(90deg,#e8e8eb 0 3px,transparent 3px 6.05px);background-position:4.5px 0"></div>
<div class="a" style="left:895px;top:448px;width:1019px;height:1px;background:repeating-linear-gradient(90deg,#e8e8eb 0 3px,transparent 3px 6.05px);background-position:4.5px 0"></div>
<div class="a" style="left:895px;top:470px;width:1019px;height:1px;background:repeating-linear-gradient(90deg,#e8e8eb 0 3px,transparent 3px 6.05px);background-position:4.5px 0"></div>
<div class="a" style="left:895px;top:492px;width:1019px;height:1px;background:repeating-linear-gradient(90deg,#e8e8eb 0 3px,transparent 3px 6.05px);background-position:4.5px 0"></div>
<div class="a" style="left:895px;top:515px;width:1019px;height:1px;background:repeating-linear-gradient(90deg,#e8e8eb 0 3px,transparent 3px 6.05px);background-position:4.5px 0"></div>
<div class="a" style="left:895px;top:537px;width:1019px;height:1px;background:repeating-linear-gradient(90deg,#e8e8eb 0 3px,transparent 3px 6.05px);background-position:4.5px 0"></div>
<div class="a" style="left:895px;top:559px;width:1019px;height:1px;background:repeating-linear-gradient(90deg,#e8e8eb 0 3px,transparent 3px 6.05px);background-position:4.5px 0"></div>
<div class="a" style="left:895px;top:581px;width:1019px;height:1px;background:repeating-linear-gradient(90deg,#e8e8eb 0 3px,transparent 3px 6.05px);background-position:4.5px 0"></div>
<div class="a" style="left:895px;top:603px;width:1019px;height:1px;background:repeating-linear-gradient(90deg,#e8e8eb 0 3px,transparent 3px 6.05px);background-position:4.5px 0"></div>
<div class="a" style="left:895px;top:625px;width:1019px;height:1px;background:repeating-linear-gradient(90deg,#e8e8eb 0 3px,transparent 3px 6.05px);background-position:4.5px 0"></div>
<div class="a" style="left:895px;top:647px;width:1019px;height:1px;background:repeating-linear-gradient(90deg,#e8e8eb 0 3px,transparent 3px 6.05px);background-position:4.5px 0"></div>
<div class="a" style="left:895px;top:669px;width:1019px;height:1px;background:repeating-linear-gradient(90deg,#e8e8eb 0 3px,transparent 3px 6.05px);background-position:4.5px 0"></div>
<div class="a" style="left:895px;top:691px;width:1019px;height:1px;background:repeating-linear-gradient(90deg,#e8e8eb 0 3px,transparent 3px 6.05px);background-position:4.5px 0"></div>
<div class="a" style="left:895px;top:713px;width:1019px;height:1px;background:repeating-linear-gradient(90deg,#e8e8eb 0 3px,transparent 3px 6.05px);background-position:4.5px 0"></div>
<div class="a" style="left:895px;top:735px;width:1019px;height:1px;background:repeating-linear-gradient(90deg,#e8e8eb 0 3px,transparent 3px 6.05px);background-position:4.5px 0"></div>
<div class="a" style="left:895px;top:757px;width:1019px;height:1px;background:repeating-linear-gradient(90deg,#e8e8eb 0 3px,transparent 3px 6.05px);background-position:4.5px 0"></div>
<div class="a" style="left:895px;top:779px;width:1019px;height:1px;background:repeating-linear-gradient(90deg,#e8e8eb 0 3px,transparent 3px 6.05px);background-position:4.5px 0"></div>
<div class="a" style="left:895px;top:801px;width:1019px;height:1px;background:repeating-linear-gradient(90deg,#e8e8eb 0 3px,transparent 3px 6.05px);background-position:4.5px 0"></div>
<div class="a" style="left:895px;top:823px;width:1019px;height:1px;background:repeating-linear-gradient(90deg,#e8e8eb 0 3px,transparent 3px 6.05px);background-position:4.5px 0"></div>
<div class="a" style="left:895px;top:845px;width:1019px;height:1px;background:repeating-linear-gradient(90deg,#e8e8eb 0 3px,transparent 3px 6.05px);background-position:4.5px 0"></div>
<div class="a" style="left:895px;top:867px;width:1019px;height:1px;background:repeating-linear-gradient(90deg,#e8e8eb 0 3px,transparent 3px 6.05px);background-position:4.5px 0"></div>
<div class="a" style="left:895px;top:889px;width:1019px;height:1px;background:repeating-linear-gradient(90deg,#e8e8eb 0 3px,transparent 3px 6.05px);background-position:4.5px 0"></div>
<div class="a" style="left:895px;top:911px;width:1019px;height:1px;background:repeating-linear-gradient(90deg,#e8e8eb 0 3px,transparent 3px 6.05px);background-position:4.5px 0"></div>
<svg class="a" style="left:935px;top:141px" width="12" height="768"><line x1="6" y1="0" x2="6" y2="768" stroke="#1f74e0" stroke-width="2" stroke-dasharray="6 3.018"/><line x1="7.5" y1="0" x2="7.5" y2="768" stroke="#ee4060" stroke-width="1" stroke-dasharray="6 3.018"/></svg>
<svg class="a" style="left:936px;top:141px" width="11" height="7"><path d="M0.5 0h10l-5 6.5z" fill="#1f74e0"/></svg>
<div class="a" style="left:944px;top:143px;width:12px;height:100px;overflow:hidden"><div style="position:absolute;left:0;top:0;transform-origin:0 0;transform:translate(12px,0) rotate(90deg);font-size:10.5px;line-height:12px;color:#7a7a80;white-space:nowrap">Дата актуализации</div></div>
<div class="a" style="left:940.5px;top:153px;width:973.5px;height:4px;background:#000"></div>
<svg class="a" style="left:940.5px;top:156px" width="5" height="4"><path d="M0 0h5L0 4z" fill="#000"/></svg>
<div class="a" style="left:940.5px;top:175px;width:973.5px;height:4px;background:#000"></div>
<svg class="a" style="left:940.5px;top:178px" width="5" height="4"><path d="M0 0h5L0 4z" fill="#000"/></svg>
<div class="a" style="left:940.5px;top:197px;width:973.5px;height:4px;background:#000"></div>
<svg class="a" style="left:940.5px;top:200px" width="5" height="4"><path d="M0 0h5L0 4z" fill="#000"/></svg>
<div class="a" style="left:940.5px;top:219px;width:973.5px;height:4px;background:#000"></div>
<svg class="a" style="left:940.5px;top:222px" width="5" height="4"><path d="M0 0h5L0 4z" fill="#000"/></svg>
<div class="a" style="left:940.5px;top:241px;width:244.3px;height:4px;background:#000"></div>
<svg class="a" style="left:940.5px;top:244px" width="5" height="4"><path d="M0 0h5L0 4z" fill="#000"/></svg>
<svg class="a" style="left:1180.3px;top:244px" width="5" height="4"><path d="M0 0h5v4z" fill="#000"/></svg>
<div class="t" style="left:1204.8px;top:230.22px;color:#55555b;font-weight:bold;font-size:12.2px">02.09.02.5 02-02-2-01 на промеж.опоры</div>
<div class="a" style="left:940.5px;top:263px;width:172.2px;height:4px;background:#000"></div>
<svg class="a" style="left:940.5px;top:266px" width="5" height="4"><path d="M0 0h5L0 4z" fill="#000"/></svg>
<svg class="a" style="left:1108.2px;top:266px" width="5" height="4"><path d="M0 0h5v4z" fill="#000"/></svg>
<div class="t" style="left:1132.7px;top:252.25px;color:#55555b;font-weight:bold;font-size:12.2px">Опора ОП-2л</div>
<div class="a" style="left:940.5px;top:286px;width:6.9px;height:7px;background:#22c795"></div>
<div class="a" style="left:940.5px;top:286px;width:4px;height:7px;background:#000"></div>
<div class="a" style="left:943.4px;top:286px;width:4px;height:7px;background:#000"></div>
<div class="t" style="left:968.4px;top:274.28px;color:#5c5c62;font-size:12.8px">Установка оконных блоков</div>
<div class="a" style="left:940.5px;top:308px;width:172.2px;height:7px;background:#22c795"></div>
<div class="a" style="left:940.5px;top:308px;width:4px;height:7px;background:#000"></div>
<div class="a" style="left:1108.7px;top:308px;width:4px;height:7px;background:#000"></div>
<div class="t" style="left:1133.7px;top:296.31px;color:#5c5c62;font-size:12.8px">Устройство пешеходных дорожек</div>
<div class="a" style="left:940.5px;top:330px;width:4.0px;height:7px;background:#22c795"></div>
<div class="a" style="left:940.5px;top:330px;width:4px;height:7px;background:#000"></div>
<div class="a" style="left:937.0px;top:330px;width:4px;height:7px;background:#000"></div>
<div class="t" style="left:962.0px;top:318.34px;color:#5c5c62;font-size:12.8px">Монтаж панели ВРУ</div>
<div class="a" style="left:940.5px;top:352px;width:156.3px;height:7px;background:#22c795"></div>
<div class="a" style="left:940.5px;top:352px;width:4px;height:7px;background:#000"></div>
<div class="a" style="left:1092.8px;top:352px;width:4px;height:7px;background:#000"></div>
<div class="t" style="left:1117.8px;top:340.37px;color:#5c5c62;font-size:12.8px">Прочие работы</div>
<div class="a" style="left:940.5px;top:373px;width:244.3px;height:4px;background:#000"></div>
<svg class="a" style="left:940.5px;top:376px" width="5" height="4"><path d="M0 0h5L0 4z" fill="#000"/></svg>
<svg class="a" style="left:1180.3px;top:376px" width="5" height="4"><path d="M0 0h5v4z" fill="#000"/></svg>
<div class="t" style="left:1204.8px;top:362.40px;color:#55555b;font-weight:bold;font-size:12.2px">Опора ОП-3л</div>
<div class="a" style="left:940.5px;top:396px;width:244.3px;height:7px;background:#22c795"></div>
<div class="a" style="left:940.5px;top:396px;width:4px;height:7px;background:#000"></div>
<div class="a" style="left:1180.8px;top:396px;width:4px;height:7px;background:#000"></div>
<div class="t" style="left:1205.8px;top:384.43px;color:#5c5c62;font-size:12.8px">Устройство пешеходных дорожек</div>
<div class="a" style="left:940.5px;top:418px;width:6.9px;height:7px;background:#22c795"></div>
<div class="a" style="left:940.5px;top:418px;width:4px;height:7px;background:#000"></div>
<div class="a" style="left:943.4px;top:418px;width:4px;height:7px;background:#000"></div>
<div class="t" style="left:968.4px;top:406.46px;color:#5c5c62;font-size:12.8px">Установка оконных блоков</div>
<div class="a" style="left:940.5px;top:440px;width:4.0px;height:7px;background:#22c795"></div>
<div class="a" style="left:940.5px;top:440px;width:4px;height:7px;background:#000"></div>
<div class="a" style="left:936.7px;top:440px;width:4px;height:7px;background:#000"></div>
<div class="t" style="left:961.7px;top:428.49px;color:#5c5c62;font-size:12.8px">Монтаж панели ВРУ</div>
<div class="a" style="left:940.5px;top:462px;width:196.7px;height:7px;background:#22c795"></div>
<div class="a" style="left:940.5px;top:462px;width:4px;height:7px;background:#000"></div>
<div class="a" style="left:1133.2px;top:462px;width:4px;height:7px;background:#000"></div>
<div class="t" style="left:1158.2px;top:450.52px;color:#5c5c62;font-size:12.8px">Прочие работы</div>
<div class="a" style="left:940.5px;top:483px;width:179.9px;height:4px;background:#000"></div>
<svg class="a" style="left:940.5px;top:486px" width="5" height="4"><path d="M0 0h5L0 4z" fill="#000"/></svg>
<svg class="a" style="left:1115.8px;top:486px" width="5" height="4"><path d="M0 0h5v4z" fill="#000"/></svg>
<div class="t" style="left:1140.3px;top:472.55px;color:#55555b;font-weight:bold;font-size:12.2px">Опора ОП-2п</div>
<div class="a" style="left:940.5px;top:506px;width:6.9px;height:7px;background:#22c795"></div>
<div class="a" style="left:940.5px;top:506px;width:4px;height:7px;background:#000"></div>
<div class="a" style="left:943.4px;top:506px;width:4px;height:7px;background:#000"></div>
<div class="t" style="left:968.4px;top:494.58px;color:#5c5c62;font-size:12.8px">Установка оконных блоков</div>
<div class="a" style="left:940.5px;top:529px;width:178.3px;height:7px;background:#22c795"></div>
<div class="a" style="left:940.5px;top:529px;width:4px;height:7px;background:#000"></div>
<div class="a" style="left:1114.7px;top:529px;width:4px;height:7px;background:#000"></div>
<div class="t" style="left:1139.7px;top:516.61px;color:#5c5c62;font-size:12.8px">Устройство пешеходных дорожек</div>
<div class="a" style="left:940.5px;top:551px;width:71.8px;height:7px;background:#22c795"></div>
<div class="a" style="left:940.5px;top:551px;width:4px;height:7px;background:#000"></div>
<div class="a" style="left:1008.3px;top:551px;width:4px;height:7px;background:#000"></div>
<div class="t" style="left:1033.3px;top:538.64px;color:#5c5c62;font-size:12.8px">Монтаж сварных трубопроводов d 50-250</div>
<div class="a" style="left:940.5px;top:573px;width:4.0px;height:7px;background:#22c795"></div>
<div class="a" style="left:940.5px;top:573px;width:4px;height:7px;background:#000"></div>
<div class="a" style="left:936.7px;top:573px;width:4px;height:7px;background:#000"></div>
<div class="t" style="left:961.7px;top:560.67px;color:#5c5c62;font-size:12.8px">Монтаж панели ВРУ</div>
<div class="a" style="left:940.5px;top:595px;width:179.9px;height:7px;background:#22c795"></div>
<div class="a" style="left:940.5px;top:595px;width:4px;height:7px;background:#000"></div>
<div class="a" style="left:1116.3px;top:595px;width:4px;height:7px;background:#000"></div>
<div class="t" style="left:1141.3px;top:582.70px;color:#5c5c62;font-size:12.8px">Прочие работы</div>
<div class="a" style="left:940.5px;top:616px;width:221.5px;height:4px;background:#000"></div>
<svg class="a" style="left:940.5px;top:619px" width="5" height="4"><path d="M0 0h5L0 4z" fill="#000"/></svg>
<svg class="a" style="left:1157.5px;top:619px" width="5" height="4"><path d="M0 0h5v4z" fill="#000"/></svg>
<div class="t" style="left:1182.0px;top:604.73px;color:#55555b;font-weight:bold;font-size:12.2px">Опора ОП-3п</div>
<div class="a" style="left:940.5px;top:639px;width:220.4px;height:7px;background:#22c795"></div>
<div class="a" style="left:940.5px;top:639px;width:4px;height:7px;background:#000"></div>
<div class="a" style="left:1156.8px;top:639px;width:4px;height:7px;background:#000"></div>
<div class="t" style="left:1181.8px;top:626.76px;color:#5c5c62;font-size:12.8px">Устройство пешеходных дорожек</div>
<div class="a" style="left:940.5px;top:661px;width:6.9px;height:7px;background:#22c795"></div>
<div class="a" style="left:940.5px;top:661px;width:4px;height:7px;background:#000"></div>
<div class="a" style="left:943.4px;top:661px;width:4px;height:7px;background:#000"></div>
<div class="t" style="left:968.4px;top:648.79px;color:#5c5c62;font-size:12.8px">Установка оконных блоков</div>
<div class="a" style="left:940.5px;top:683px;width:4.0px;height:7px;background:#22c795"></div>
<div class="a" style="left:940.5px;top:683px;width:4px;height:7px;background:#000"></div>
<div class="a" style="left:936.7px;top:683px;width:4px;height:7px;background:#000"></div>
<div class="t" style="left:961.7px;top:670.82px;color:#5c5c62;font-size:12.8px">Монтаж панели ВРУ</div>
<div class="a" style="left:940.5px;top:705px;width:221.5px;height:7px;background:#22c795"></div>
<div class="a" style="left:940.5px;top:705px;width:4px;height:7px;background:#000"></div>
<div class="a" style="left:1158.0px;top:705px;width:4px;height:7px;background:#000"></div>
<div class="t" style="left:1183.0px;top:692.85px;color:#5c5c62;font-size:12.8px">Прочие работы</div>
<div class="a" style="left:940.5px;top:726px;width:973.5px;height:4px;background:#000"></div>
<svg class="a" style="left:940.5px;top:729px" width="5" height="4"><path d="M0 0h5L0 4z" fill="#000"/></svg>
<div class="a" style="left:940.5px;top:748px;width:417.3px;height:4px;background:#000"></div>
<svg class="a" style="left:940.5px;top:751px" width="5" height="4"><path d="M0 0h5L0 4z" fill="#000"/></svg>
<svg class="a" style="left:1353.3px;top:751px" width="5" height="4"><path d="M0 0h5v4z" fill="#000"/></svg>
<div class="t" style="left:1377.8px;top:736.91px;color:#55555b;font-weight:bold;font-size:12.2px">Опора ОК-1л</div>
<div class="a" style="left:940.5px;top:771px;width:9.1px;height:7px;background:#22c795"></div>
<div class="a" style="left:940.5px;top:771px;width:4px;height:7px;background:#000"></div>
<div class="a" style="left:945.6px;top:771px;width:4px;height:7px;background:#000"></div>
<div class="t" style="left:970.6px;top:758.94px;color:#5c5c62;font-size:12.8px">Установка оконных блоков</div>
<div class="a" style="left:940.5px;top:793px;width:390.0px;height:7px;background:#22c795"></div>
<div class="a" style="left:940.5px;top:793px;width:4px;height:7px;background:#000"></div>
<div class="a" style="left:1326.5px;top:793px;width:4px;height:7px;background:#000"></div>
<div class="t" style="left:1351.5px;top:780.97px;color:#5c5c62;font-size:12.8px">Устройство пешеходных дорожек</div>
<div class="a" style="left:940.5px;top:815px;width:4.0px;height:7px;background:#22c795"></div>
<div class="a" style="left:940.5px;top:815px;width:4px;height:7px;background:#000"></div>
<div class="a" style="left:937.4px;top:815px;width:4px;height:7px;background:#000"></div>
<div class="t" style="left:962.4px;top:803.00px;color:#5c5c62;font-size:12.8px">Монтаж панели ВРУ</div>
<div class="a" style="left:940.5px;top:837px;width:417.3px;height:7px;background:#22c795"></div>
<div class="a" style="left:940.5px;top:837px;width:4px;height:7px;background:#000"></div>
<div class="a" style="left:1353.8px;top:837px;width:4px;height:7px;background:#000"></div>
<div class="t" style="left:1378.8px;top:825.03px;color:#5c5c62;font-size:12.8px">Прочие работы</div>
<div class="a" style="left:940.5px;top:858px;width:973.5px;height:4px;background:#000"></div>
<svg class="a" style="left:940.5px;top:861px" width="5" height="4"><path d="M0 0h5L0 4z" fill="#000"/></svg>
<div class="a" style="left:940.5px;top:881px;width:23.2px;height:7px;background:#22c795"></div>
<div class="a" style="left:940.5px;top:881px;width:4px;height:7px;background:#000"></div>
<div class="a" style="left:959.7px;top:881px;width:4px;height:7px;background:#000"></div>
<div class="t" style="left:984.7px;top:869.09px;color:#5c5c62;font-size:12.8px">Установка оконных блоков</div>
<div class="a" style="left:940.5px;top:903px;width:806.8px;height:7px;background:#22c795"></div>
<div class="a" style="left:940.5px;top:903px;width:4px;height:7px;background:#000"></div>
<div class="a" style="left:1743.3px;top:903px;width:4px;height:7px;background:#000"></div>
<div class="t" style="left:1768.3px;top:891.12px;color:#5c5c62;font-size:12.8px">Устройство пешеходных дорожек</div>
</div></div>
<div class="a" style="left:1914px;top:141px;width:3px;height:768px;background:#f2f2f4"></div>
<div class="a" style="left:1914px;top:142px;width:3px;height:88px;background:#d8d8dc;border-radius:2px"></div>
<div class="a" style="left:0;top:909px;width:1917px;height:1px;background:#fff"></div>
</body></html>
